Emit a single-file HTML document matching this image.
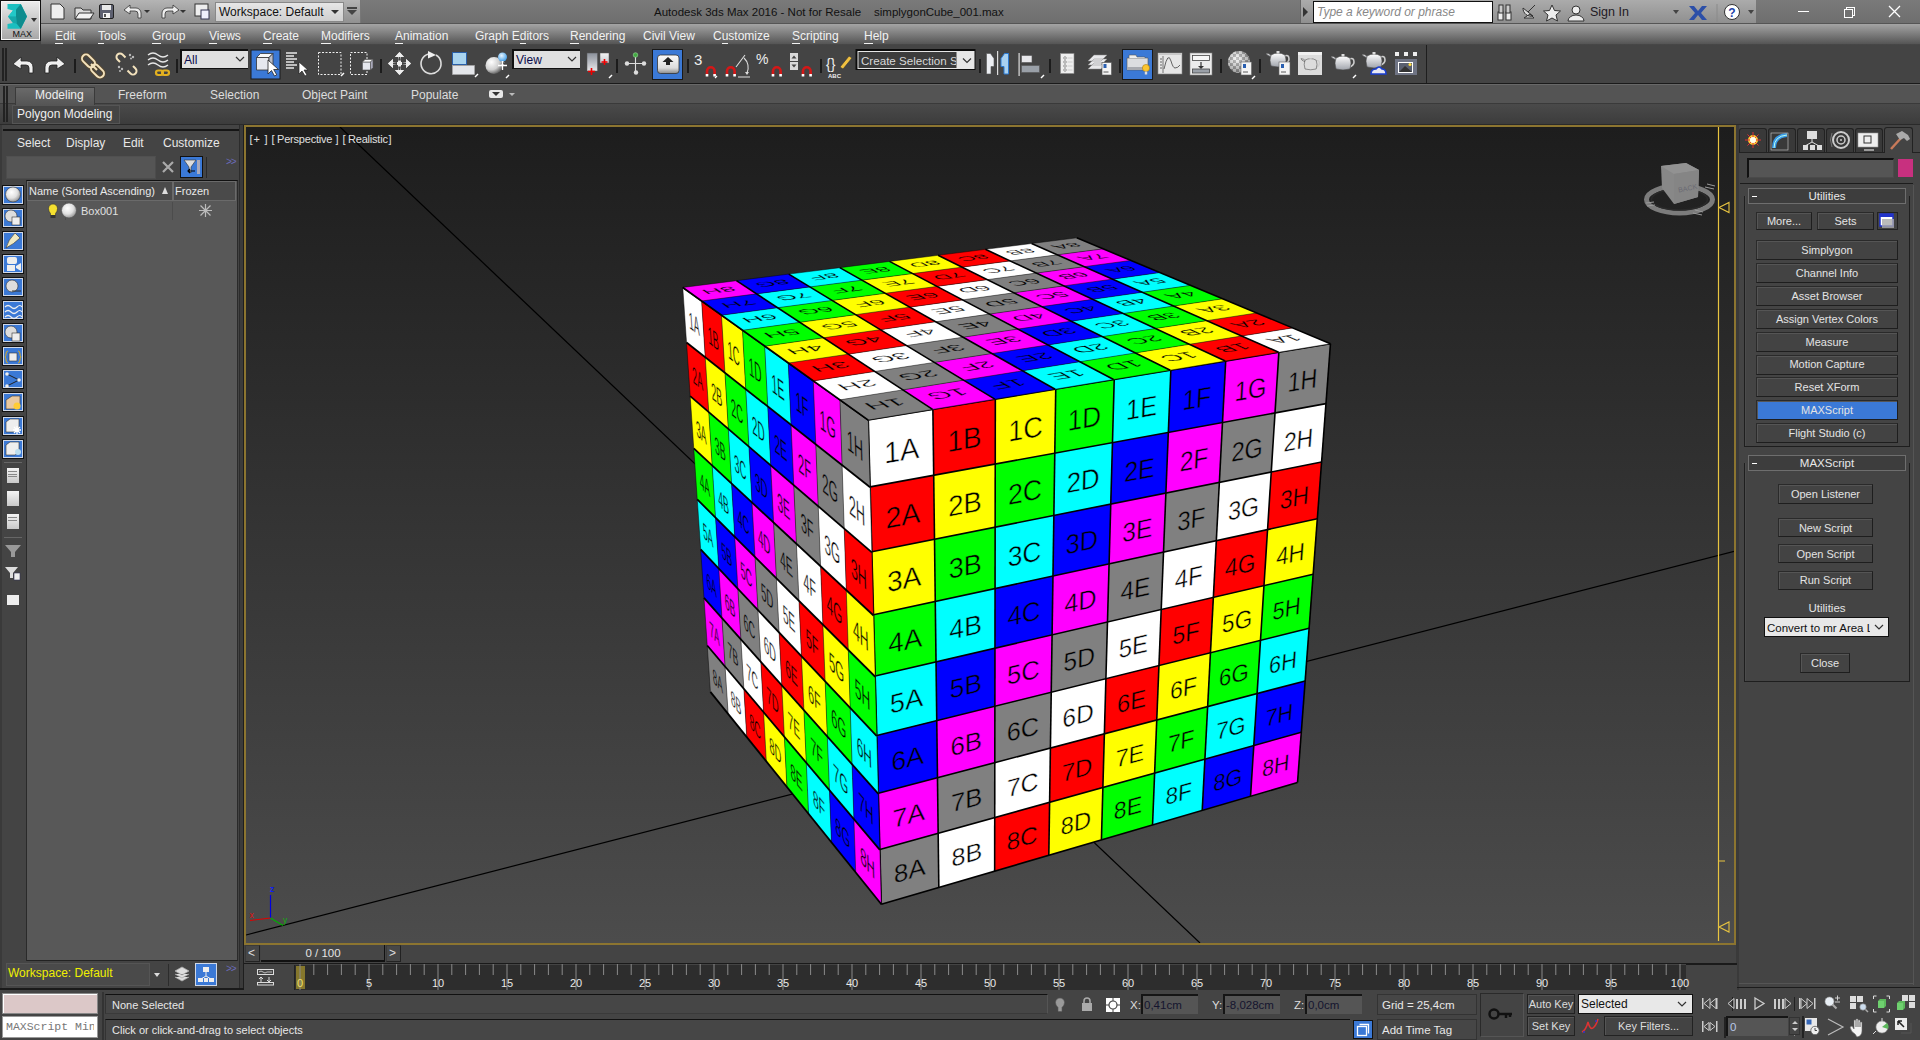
<!DOCTYPE html>
<html><head><meta charset="utf-8">
<style>
*{box-sizing:border-box;margin:0;padding:0}
html,body{width:1920px;height:1040px;overflow:hidden;background:#444;font-family:"Liberation Sans",sans-serif;font-size:12px;color:#ddd}
.a{position:absolute}
.t{position:absolute;white-space:nowrap;line-height:14px}
#vp{position:absolute;left:244px;top:125px;width:1492px;height:820px;border:2px solid #8c7530;background:linear-gradient(#1d1d1d,#4c4c4c);overflow:hidden}
#cubewrap{position:absolute;left:0;top:0;width:1920px;height:1040px;pointer-events:none}
.face{position:absolute;left:0;top:0;transform-origin:0 0}
.face>div{position:absolute;overflow:hidden}
.face span{position:absolute;left:0;top:0;width:100px;height:100px;transform-origin:0 0;font-size:45px;line-height:106px;text-align:center;color:#000}
.menu span{position:absolute;top:5px;color:#f2f2f2;white-space:nowrap}
.menu u{text-decoration:none;border-bottom:1px solid #f2f2f2}
.tb svg{position:absolute}
.sep{position:absolute;width:2px;height:20px;background:#222}
.btn{position:absolute;background:#3f3f3f;border:1px solid #222;color:#ddd;text-align:center;font-size:11.5px;line-height:19px;white-space:nowrap;overflow:hidden}
</style></head><body>
<svg width="0" height="0" style="position:absolute"><defs><radialGradient id="sph" cx="0.4" cy="0.35" r="0.65"><stop offset="0" stop-color="#ffffff"/><stop offset="0.6" stop-color="#e0e0e0"/><stop offset="1" stop-color="#9a9a9a"/></radialGradient></defs></svg>
<!-- TITLE BAR -->
<div class="a" style="left:0;top:0;width:1920px;height:24px;background:linear-gradient(#7a7a7a,#6e6e6e)"></div>
<div class="a" style="left:41px;top:0;width:320px;height:24px;background:linear-gradient(#b4b4b4,#8f8f8f);border-right:1px solid #777"></div>
<div class="a" style="left:215px;top:2px;width:129px;height:20px;background:linear-gradient(#e6e6e6,#cfcfcf);border:1px solid #888"></div>
<div class="t" style="left:219px;top:5px;color:#111;font-size:12px">Workspace: Default</div>
<div class="a" style="left:331px;top:10px;width:0;height:0;border-left:4px solid transparent;border-right:4px solid transparent;border-top:4px solid #333"></div>
<div class="a" style="left:347px;top:7px;width:10px;height:2px;background:#444"></div>
<div class="a" style="left:347px;top:10px;width:0;height:0;border-left:5px solid transparent;border-right:5px solid transparent;border-top:5px solid #444"></div>
<div class="t" style="left:654px;top:5px;color:#111;font-size:11.5px">Autodesk 3ds Max 2016 - Not for Resale</div><div class="t" style="left:874px;top:5px;color:#111;font-size:11.5px">simplygonCube_001.max</div>
<div class="a" style="left:1300px;top:0;width:456px;height:24px;background:linear-gradient(#ababab,#8e8e8e);border-left:1px solid #666"></div>
<div class="a" style="left:1303px;top:7px;width:0;height:0;border-top:5px solid transparent;border-bottom:5px solid transparent;border-left:5px solid #333"></div>
<div class="a" style="left:1313px;top:1px;width:180px;height:22px;background:#fff;border:1px solid #111"></div>
<div class="t" style="left:1317px;top:5px;color:#888;font-style:italic;font-size:12px">Type a keyword or phrase</div>
<!-- MAX logo -->
<div class="a" style="left:0;top:0;width:41px;height:41px;background:linear-gradient(#ececec,#a6a6a6);border:1px solid #111;box-shadow:inset 0 0 0 1px #f4f4f4"></div>
<svg class="a" style="left:0;top:0" width="41" height="41"><path d="M7.5 4 L20.8 4 L27 16.5 L20.8 28.8 L7.5 28.8 L7.5 24 L13 23 L8 16.5 L13 10.5 L7.5 9 Z" fill="#1bbfc0"/><path d="M16 9.5 L20.8 4 L27 16.5 L20.8 28.8 L16.5 23.5 L16 16.5 Z" fill="#0e8c8e"/><path d="M13 10.5 L16 9.5 L16 16.5 L8 16.5z" fill="#22c8c8"/><path d="M8 16.5 L16 16.5 L16.5 23.5 L13 23z" fill="#17a8aa"/></svg>
<div class="a" style="left:31px;top:18px;width:0;height:0;border-left:3.5px solid transparent;border-right:3.5px solid transparent;border-top:4px solid #333"></div>
<div class="t" style="left:12.5px;top:29px;color:#111;font-size:9px;line-height:11px">MAX</div>
<!-- quick access icons -->
<svg class="a" style="left:48px;top:1px" width="170" height="22">
 <path d="M3 3 h9 l4 4 v11 h-13z" fill="#eee" stroke="#333"/>
 <path d="M27 7 h6 l2 2 h8 v9 h-16z" fill="#ddd" stroke="#333"/><path d="M27 18 l4 -6 h15 l-4 6z" fill="#f2f2f2" stroke="#333"/>
 <rect x="51.5" y="3.5" width="14" height="14" rx="1.5" fill="#5d6070" stroke="#222"/><rect x="54" y="4" width="9" height="5" fill="#e8e8e8"/><rect x="55" y="12" width="7" height="5" fill="#f4f4f4"/><rect x="56" y="13" width="2" height="3" fill="#555"/>
 <path d="M76 9 l6 -5 v3 h6 a5 5 0 0 1 5 5 v5 h-3 v-4 a3 3 0 0 0 -3 -3 h-5 v3z" fill="#eee" stroke="#333" stroke-width="0.8"/>
 <path d="M96 9 l3 3 l3 -3z" fill="#333"/>
 <path d="M131 9 l-6 -5 v3 h-6 a5 5 0 0 0 -5 5 v5 h3 v-4 a3 3 0 0 1 3 -3 h5 v3z" fill="#eee" stroke="#333" stroke-width="0.8"/>
 <path d="M132 9 l3 3 l3 -3z" fill="#333"/>
 <rect x="147" y="3" width="13" height="12" fill="#eee" stroke="#333"/><rect x="153" y="9" width="8" height="9" fill="#eef" stroke="#335"/>
</svg>
<!-- right title icons -->
<svg class="a" style="left:1495px;top:2px" width="130" height="20">
 <rect x="3" y="10" width="5" height="8" fill="#eee" stroke="#333"/><rect x="11" y="10" width="5" height="8" fill="#eee" stroke="#333"/><rect x="4" y="3" width="4" height="8" fill="#ccc" stroke="#333"/><rect x="11" y="3" width="4" height="8" fill="#ccc" stroke="#333"/>
 <path d="M29 16 l6 -4 l4 4z M28 6 a8 8 0 0 0 10 8z" fill="#ddd" stroke="#333"/><line x1="33" y1="10" x2="40" y2="3" stroke="#333"/>
 <path d="M57 3 l2.5 5.5 l6 .5 l-4.5 4 l1.5 6 l-5.5 -3 l-5.5 3 l1.5 -6 l-4.5 -4 l6 -.5z" fill="#eee" stroke="#333"/>
 <circle cx="81" cy="8" r="4" fill="#eee" stroke="#333"/><path d="M73 19 a8 6 0 0 1 16 0z" fill="#eee" stroke="#333"/>
</svg>
<div class="t" style="left:1590px;top:5px;color:#1e1a24;font-size:12.5px">Sign In</div>
<div class="a" style="left:1673px;top:10px;width:0;height:0;border-left:3.5px solid transparent;border-right:3.5px solid transparent;border-top:4px solid #444"></div>
<svg class="a" style="left:1688px;top:4px" width="60" height="18">
 <path d="M1 2 h5 l4 5 l4 -5 h5 l-6 7 l6 7 h-5 l-4 -5 l-4 5 h-5 l6 -7z" fill="#2c4fa8"/>
 <line x1="29" y1="0" x2="29" y2="18" stroke="#8a8a8a"/>
 <circle cx="44" cy="8" r="7.5" fill="#fff" stroke="#333"/><text x="44" y="12.5" font-size="12" font-weight="bold" text-anchor="middle" fill="#1c3fa8" font-family="Liberation Sans">?</text>
</svg>
<div class="a" style="left:1748px;top:10px;width:0;height:0;border-left:3.5px solid transparent;border-right:3.5px solid transparent;border-top:4px solid #444"></div>
<div class="a" style="left:1798px;top:11px;width:11px;height:1px;background:#fff"></div>
<div class="a" style="left:1846px;top:7px;width:9px;height:9px;border:1px solid #fff"></div>
<div class="a" style="left:1844px;top:9px;width:9px;height:9px;border:1px solid #fff;background:#717171"></div>
<svg class="a" style="left:1888px;top:5px" width="13" height="13"><path d="M1 1 L12 12 M12 1 L1 12" stroke="#fff" stroke-width="1.3"/></svg>
<!-- MENU BAR -->
<div class="a" style="left:41px;top:23px;width:1879px;height:1px;background:#555"></div>
<div class="a menu" style="left:41px;top:24px;width:1879px;height:21px;background:linear-gradient(#a4a4a4,#555 95%,#3a3a3a)">
 <span style="left:14px"><u>E</u>dit</span><span style="left:57px"><u>T</u>ools</span><span style="left:111px"><u>G</u>roup</span><span style="left:168px"><u>V</u>iews</span><span style="left:222px"><u>C</u>reate</span><span style="left:280px"><u>M</u>odifiers</span><span style="left:354px"><u>A</u>nimation</span><span style="left:434px">Graph E<u>d</u>itors</span><span style="left:529px"><u>R</u>endering</span><span style="left:602px">Civil View</span><span style="left:672px">C<u>u</u>stomize</span><span style="left:751px"><u>S</u>cripting</span><span style="left:823px"><u>H</u>elp</span>
</div>
<!-- MAIN TOOLBAR -->
<div class="a" style="left:0;top:45px;width:1920px;height:39px;background:#444;border-bottom:1px solid #1a1a1a"></div>
<div class="a" style="left:0;top:45px;width:1427px;height:38px;border-right:1px solid #1e1e1e"></div>
<div class="a" style="left:2px;top:48px;width:2px;height:33px;background:#222"></div>
<div class="a" style="left:5px;top:48px;width:2px;height:33px;background:#222"></div>
<svg class="a" style="left:0;top:45px" width="1430" height="38"><defs><linearGradient id="tpg" x1="0" y1="0" x2="0" y2="1"><stop offset="0" stop-color="#ffffff"/><stop offset="1" stop-color="#a0a4ac"/></linearGradient><pattern id="chk" width="6" height="6" patternUnits="userSpaceOnUse"><rect width="6" height="6" fill="#f0f0f0"/><rect width="3" height="3" fill="#8a8a8a"/><rect x="3" y="3" width="3" height="3" fill="#8a8a8a"/></pattern><radialGradient id="sph2" cx="0.4" cy="0.35" r="0.7"><stop offset="0" stop-color="#fff" stop-opacity="0.5"/><stop offset="1" stop-color="#444" stop-opacity="0.5"/></radialGradient><radialGradient id="sph3" cx="0.35" cy="0.3" r="0.75"><stop offset="0" stop-color="#fff"/><stop offset="0.6" stop-color="#cfcfcf"/><stop offset="1" stop-color="#555"/></radialGradient><radialGradient id="sphb" cx="0.4" cy="0.35" r="0.7"><stop offset="0" stop-color="#e8f6ff"/><stop offset="1" stop-color="#3a9ae8"/></radialGradient><linearGradient id="gpv" x1="0" y1="0" x2="0" y2="1"><stop offset="0" stop-color="#8a909a"/><stop offset="1" stop-color="#e8e8ea"/></linearGradient><linearGradient id="gpw" x1="0" y1="0" x2="0" y2="1"><stop offset="0" stop-color="#f4f4f4"/><stop offset="1" stop-color="#c8cad0"/></linearGradient><linearGradient id="gkb" x1="0" y1="0" x2="0" y2="1"><stop offset="0" stop-color="#fafafa"/><stop offset="0.7" stop-color="#dcdcdc"/><stop offset="1" stop-color="#8a8a8a"/></linearGradient></defs>
 <g fill="#f0f0f0" stroke="#222" stroke-width="0.8">
  <path d="M13 19 l8 -7 v4 h6 a6 6 0 0 1 6 6 v6 h-4 v-5 a3 3 0 0 0 -3 -3 h-5 v4z"/>
  <path d="M65 19 l-8 -7 v4 h-6 a6 6 0 0 0 -6 6 v6 h4 v-5 a3 3 0 0 1 3 -3 h5 v4z"/>
 </g>
 <rect x="74" y="14" width="2" height="14" fill="#1c1c1c"/>
 <g fill="none" stroke="#5a4a30" stroke-width="3.6"><rect x="81" y="12" width="15" height="8" rx="4" transform="rotate(45 88.5 16)"/><rect x="90" y="22" width="15" height="8" rx="4" transform="rotate(45 97.5 26)"/><path d="M91 19 l6 6"/></g>
 <g fill="none" stroke="#f3e2bd" stroke-width="2"><rect x="81" y="12" width="15" height="8" rx="4" transform="rotate(45 88.5 16)"/><rect x="90" y="22" width="15" height="8" rx="4" transform="rotate(45 97.5 26)"/><path d="M91 19 l6 6"/></g>
 <g fill="none" stroke="#f3e2bd" stroke-width="2"><path d="M120 17 l-2.5 -2.5 a3.5 3.5 0 0 1 5 -5 l3 3"/><path d="M133 21 l2.5 2.5 a3.5 3.5 0 0 1 -5 5 l-3 -3"/></g>
 <g fill="#bbb"><circle cx="130" cy="10" r="1.2"/><circle cx="133" cy="12" r="1.2"/><circle cx="131" cy="13.5" r="1"/><circle cx="119" cy="22" r="1.2"/><circle cx="122" cy="24" r="1.2"/><circle cx="120" cy="26" r="1"/></g>
 <path d="M148 10 q5 -4 10 0 t10 0 M148 15 q5 -4 10 0 t10 0 M148 20 q5 -4 10 0 t10 0" fill="none" stroke="#e6e6e6" stroke-width="1.4"/>
 <g fill="none" stroke="#e2b020" stroke-width="2.2"><rect x="156" y="25.5" width="7" height="4.5" rx="2.2"/><rect x="162" y="25.5" width="7" height="4.5" rx="2.2"/></g>
 <rect x="176" y="14" width="2" height="14" fill="#1c1c1c"/>
 <rect x="180" y="4" width="68" height="20" fill="#111"/><rect x="182" y="6" width="66" height="17" fill="#e0e0e0"/>
 <text x="184" y="19" font-size="12" fill="#0a0a4a" font-family="Liberation Sans">All</text>
 <path d="M236 12 l4 4 l4 -4" stroke="#333" fill="none" stroke-width="1.2"/>
 <rect x="251" y="5" width="29" height="29" fill="#3b79d6" stroke="#1a1a1a"/>
 <path d="M256.5 12.5 h12.5 v12.5 h-12.5z" fill="#e6e8ee" stroke="#333" stroke-width="0.8"/><path d="M256.5 12.5 l4 -4 h12.5 l-4 4z" fill="#fafafa" stroke="#333" stroke-width="0.8"/><path d="M269 12.5 l4 -4 v12.5 l-4 4z" fill="#b8bcc8" stroke="#333" stroke-width="0.8"/>
 <path d="M268 15 v14 l3.5 -3.5 l3 5.5 l2.2 -1.2 l-3 -5.3 h4.8z" fill="#fff" stroke="#222" stroke-width="0.8"/>
 <g stroke="#e8e8e8" stroke-width="1.3"><path d="M286 8 h11 M286 11 h8 M286 14 h11 M286 17 h8 M286 20 h11 M286 23 h8"/></g>
 <path d="M299 17 v12 l3 -3 l3 5 l2 -1 l-3 -5 h4z" fill="#fff" stroke="#222" stroke-width="0.7"/>
 <rect x="318.5" y="7.5" width="22.5" height="22" fill="none" stroke="#eee" stroke-dasharray="2,1.5"/><path d="M341 31 l3 -3" stroke="#fff" stroke-width="1.5"/>
 <rect x="350.5" y="7.5" width="16.5" height="22" fill="none" stroke="#eee" stroke-dasharray="2,1.5"/>
 <path d="M362.5 17 h8 v8 h-8z" fill="#e6e8ee" stroke="#555" stroke-width="0.6"/><path d="M362.5 17 l2.5 -2.5 h8 l-2.5 2.5z" fill="#fafafa" stroke="#555" stroke-width="0.6"/><path d="M370.5 17 l2.5 -2.5 v8 l-2.5 2.5z" fill="#aab" stroke="#555" stroke-width="0.6"/>
 <rect x="380" y="14" width="2" height="14" fill="#1c1c1c"/>
 <path d="M399.5 7 l-4.5 5 h3 v4 M399.5 7 l4.5 5 h-3 v4 M399.5 30 l-4.5 -5 h3 v-4 M399.5 30 l4.5 -5 h-3 v-4 M388 18.5 l5 -4.5 v3 h4 M388 18.5 l5 4.5 v-3 h4 M411 18.5 l-5 -4.5 v3 h-4 M411 18.5 l-5 4.5 v-3 h-4" fill="#eee" stroke="none"/><path d="M395 12 h9 l-4.5 -5z M395 25 h9 l-4.5 5z M393 14 v9 l-5 -4.5z M406 14 v9 l5 -4.5z" fill="#eee"/><rect x="398" y="15.5" width="3" height="1.5" fill="#eee"/><rect x="398" y="20" width="3" height="1.5" fill="#eee"/><rect x="397" y="17" width="5" height="3" fill="#eee"/>
 <path d="M436 10 a10 10 0 1 1 -7.5 -1" fill="none" stroke="#ddd" stroke-width="1.6"/><path d="M428 6 l8 4 l-8 3.5z" fill="#f0f0f0"/>
 <rect x="452.5" y="7.5" width="14" height="12" fill="#a9d4ef" stroke="#2a5fa8"/><rect x="452.5" y="20.5" width="22" height="9" fill="#e4e6ea" stroke="#aaa" stroke-width="0.6"/><path d="M475 32 l3 -3" stroke="#fff" stroke-width="1.5"/>
 <circle cx="494" cy="20.5" r="8.5" fill="url(#sph3)"/><circle cx="502.5" cy="12" r="4.5" fill="url(#sphb)"/><path d="M502.5 16 v9 M498 20.5 h9" stroke="#fff" stroke-width="1.3"/><path d="M501 20.5 l1.5 -1.5 l1.5 1.5 M502.5 16 l-1.5 1.5 M502.5 16 l1.5 1.5" stroke="#fff" fill="none" stroke-width="0.8"/><path d="M506 33 l3 -3" stroke="#fff" stroke-width="1.4"/>
 <rect x="512" y="4" width="68" height="20" fill="#111"/><rect x="514" y="6" width="66" height="17" fill="#e0e0e0"/>
 <text x="516" y="19" font-size="12" fill="#0a0a4a" font-family="Liberation Sans">View</text>
 <path d="M568 12 l4 4 l4 -4" stroke="#333" fill="none" stroke-width="1.2"/>
 <rect x="587" y="8" width="10.5" height="18" fill="url(#gpv)" stroke="#555" stroke-width="0.5"/><rect x="600" y="8" width="9" height="10" fill="url(#gpw)" stroke="#555" stroke-width="0.5"/>
 <path d="M591.5 23 v7 M588 26.5 h7 M604.5 14 v6 M601.5 17 h6" stroke="#e00" stroke-width="1.6"/><path d="M609 33 l3 -3" stroke="#fff" stroke-width="1.4"/>
 <rect x="616" y="14" width="2" height="14" fill="#1c1c1c"/>
 <path d="M635.5 12 v15 M628 18.5 h15" stroke="#ddd" stroke-width="1.1"/><circle cx="635.5" cy="10" r="2.3" fill="#4a4" stroke="#9d9" stroke-width="0.6"/><circle cx="627" cy="18.5" r="2.2" fill="#ddd"/><circle cx="644" cy="18.5" r="2.2" fill="#ddd"/><circle cx="636" cy="27.5" r="2.2" fill="#ddd"/>
 <rect x="652.5" y="4.5" width="30" height="30" fill="#3b79d6" stroke="#1a1a1a"/>
 <rect x="657.5" y="10" width="21.5" height="18.5" rx="3" fill="url(#gkb)" stroke="#333" stroke-width="0.8"/><path d="M668 12 l-5.5 5 h3.5 v3 h4 v-3 h3.5z" fill="#222"/>
 <rect x="687" y="14" width="2" height="14" fill="#1c1c1c"/>
 <text x="694" y="20" font-size="15" fill="#eee" font-family="Liberation Sans">3</text>
 <g fill="none" stroke="#d41818" stroke-width="2.6"><path d="M707 30 v-4 a3.8 3.8 0 0 1 7.6 0 v4"/><path d="M727 30 v-4 a3.8 3.8 0 0 1 7.6 0 v4"/><path d="M773 30 v-4 a3.8 3.8 0 0 1 7.6 0 v4"/><path d="M803 30 v-4 a3.8 3.8 0 0 1 7.6 0 v4"/></g>
 <g fill="#fff"><rect x="705.7" y="29" width="2.6" height="2.5"/><rect x="713.3" y="29" width="2.6" height="2.5"/><rect x="725.7" y="29" width="2.6" height="2.5"/><rect x="733.3" y="29" width="2.6" height="2.5"/><rect x="771.7" y="29" width="2.6" height="2.5"/><rect x="779.3" y="29" width="2.6" height="2.5"/><rect x="801.7" y="29" width="2.6" height="2.5"/><rect x="809.3" y="29" width="2.6" height="2.5"/></g>
 <path d="M715 33 l2 -2" stroke="#fff" stroke-width="1.2"/>
 <path d="M736 22 l9 -12 M738 32 h12 M744 13 a13 13 0 0 1 3 15" fill="none" stroke="#ddd" stroke-width="1.1"/><path d="M745 27 l2 3 l2 -3z" fill="#ddd"/>
 <text x="756" y="19" font-size="14" fill="#eee" font-family="Liberation Sans">%</text>
 <rect x="790" y="8" width="8" height="8" fill="#d8d8d8"/><rect x="790" y="17" width="8" height="8" fill="#d8d8d8"/><path d="M791.5 13.5 l2.5 -3 l2.5 3z M791.5 19.5 l2.5 3 l2.5 -3z" fill="#444"/>
 <rect x="820" y="14" width="2" height="14" fill="#1c1c1c"/>
 <text x="826" y="24" font-size="14" fill="#eee" font-family="Liberation Sans">{}</text><text x="828" y="33" font-size="6" fill="#eee" font-weight="bold" font-family="Liberation Sans">ABC</text>
 <path d="M840 22 l9 -11 l3 2 l-9 11z" fill="#f0c040" stroke="#333" stroke-width="0.6"/>
 <rect x="855.5" y="4" width="120" height="21" fill="#0c0c0c"/><rect x="857.5" y="6" width="117" height="18" fill="#e6e6e6"/><rect x="858.5" y="7" width="98" height="16" fill="#3c3c3c"/><path d="M963 13.5 l4 4 l4 -4" stroke="#333" fill="none" stroke-width="1.2"/>
 <rect x="979" y="14" width="2" height="14" fill="#1c1c1c"/>
 <path d="M986.5 8.5 h4 l3.5 5 v8 h-3 v7.5 h-4.5z" fill="#eceef2" stroke="#555" stroke-width="0.6"/><path d="M1008.5 8.5 h-4 l-3.5 5 v8 h3 v7.5 h4.5z" fill="#a8d0f0" stroke="#2a78d0" stroke-width="1"/><rect x="997" y="6" width="1.2" height="24" fill="#ddd"/>
 <rect x="1018.5" y="8" width="1.2" height="23" fill="#ddd"/><rect x="1021.5" y="10.5" width="10.5" height="7" fill="#e8e8ec" stroke="#555" stroke-width="0.6"/><rect x="1021.5" y="20.5" width="18" height="7" fill="#9aa0a8" stroke="#555" stroke-width="0.6"/><path d="M1041 33 l3 -3" stroke="#fff" stroke-width="1.4"/>
 <rect x="1049" y="14" width="2" height="14" fill="#1c1c1c"/>
 <rect x="1060.5" y="8.5" width="13.5" height="20" fill="#eeeeee" stroke="#888" stroke-width="0.6"/><g fill="none" stroke="#777" stroke-width="0.7"><circle cx="1065" cy="13" r="1.3"/><circle cx="1065" cy="17" r="1.3"/><circle cx="1065" cy="21" r="1.3"/><circle cx="1065" cy="25" r="1.3"/></g><g stroke="#ccc"><path d="M1067.5 13 h5 M1067.5 17 h5 M1067.5 21 h5 M1067.5 25 h5"/></g>
 <path d="M1088 24 l6 -6 h13 l-6 6z M1088 20 l6 -6 h13 l-6 6z M1088 16 l6 -6 h13 l-6 6z" fill="#e8e8ea" stroke="#888" stroke-width="0.5"/><rect x="1102" y="17.5" width="9.5" height="12.5" fill="#f4f4f4" stroke="#555" stroke-width="0.6"/><rect x="1103.5" y="19" width="3" height="4" fill="#2a5fb0"/><path d="M1103.5 27 h5" stroke="#333" stroke-width="0.8"/>
 <rect x="1119" y="14" width="2" height="14" fill="#1c1c1c"/>
 <rect x="1122.5" y="4.5" width="30" height="30" fill="#3b79d6" stroke="#1a1a1a"/>
 <path d="M1127 13 h21 v12 h-21z" fill="#dcdde0" stroke="#555" stroke-width="0.6"/><path d="M1129 13 v-3 h7 l1 2 h8 v1" fill="#eee" stroke="#555" stroke-width="0.6"/><rect x="1127" y="22" width="21" height="3" fill="#a8aab0"/><circle cx="1146" cy="23" r="3.6" fill="#fbc530" stroke="#a07000" stroke-width="0.5"/><rect x="1144.8" y="26.5" width="2.4" height="3" fill="#ddd"/>
 <rect x="1158" y="8" width="24" height="21" fill="#e6e6e6" stroke="#888" stroke-width="0.6"/><rect x="1158" y="8" width="24" height="2" fill="#c8c8c8"/><path d="M1163 11 v17" stroke="#555" stroke-width="0.8"/><path d="M1160 14 h2 M1160 17 h2 M1160 20 h2 M1160 23 h2" stroke="#666"/><path d="M1164 24 q4 -18 7 -8 q2 7 4 7 q3 0 5 -3" fill="none" stroke="#555" stroke-width="0.9"/>
 <rect x="1190" y="8" width="22" height="22" fill="#ececec" stroke="#888" stroke-width="0.6"/><rect x="1192.5" y="10.5" width="17" height="5" fill="#f6f6f6" stroke="#444" stroke-width="0.8"/><path d="M1201 17 v5" stroke="#333" stroke-width="1.2"/><path d="M1198 21 h6 l-3 3z" fill="#333"/><rect x="1192.5" y="24" width="17" height="4" fill="#9aa0a8" stroke="#444" stroke-width="0.8"/>
 <rect x="1220" y="14" width="2" height="14" fill="#1c1c1c"/>
 <circle cx="1239" cy="17" r="11" fill="url(#chk)"/><circle cx="1239" cy="17" r="11" fill="url(#sph2)"/><rect x="1241" y="17" width="10.5" height="13" fill="#f4f4f4" stroke="#666" stroke-width="0.6"/><rect x="1243" y="19" width="3" height="4" fill="#2a5fb0"/><path d="M1243 27 h5" stroke="#333" stroke-width="0.8"/><path d="M1252 34 l3 -3" stroke="#fff" stroke-width="1.4"/>
 <rect x="1259" y="14" width="2" height="14" fill="#1c1c1c"/>
<g transform="translate(1266.0 6.0) scale(1.00)"><path d="M5 6 q-5 -2 -5 -4 q3 0 6 3z" fill="url(#tpg)" stroke="#444" stroke-width="0.6"/><path d="M18 5 q5 -2 5 3 q0 3 -4 5" fill="none" stroke="#ccc" stroke-width="1.6"/><path d="M5 4 q7 -4 14 0 q2 5 0 11 q-7 2 -14 0 q-2 -6 0 -11z" fill="url(#tpg)" stroke="#444" stroke-width="0.6"/><rect x="10.5" y="0" width="3" height="2" fill="#ddd"/></g><rect x="1279" y="17" width="11" height="13" fill="#f4f4f4" stroke="#666" stroke-width="0.6"/><rect x="1281" y="19" width="3" height="4" fill="#2a5fb0"/><path d="M1281 27 h5" stroke="#333" stroke-width="0.8"/>
 <rect x="1298" y="7" width="24" height="23" fill="#dcdcdc"/><rect x="1298" y="7" width="24" height="3" fill="#f0f0f0"/><g transform="translate(1301.0 12.0) scale(0.80)"><path d="M5 6 q-5 -2 -5 -4 q3 0 6 3z" fill="#dcdcdc" stroke="#333" stroke-width="0.6"/><path d="M18 5 q5 -2 5 3 q0 3 -4 5" fill="none" stroke="#ccc" stroke-width="1.6"/><path d="M5 4 q7 -4 14 0 q2 5 0 11 q-7 2 -14 0 q-2 -6 0 -11z" fill="#dcdcdc" stroke="#333" stroke-width="0.6"/><rect x="10.5" y="0" width="3" height="2" fill="#ddd"/></g>
<g transform="translate(1331.0 9.0) scale(1.00)"><path d="M5 6 q-5 -2 -5 -4 q3 0 6 3z" fill="url(#tpg)" stroke="#444" stroke-width="0.6"/><path d="M18 5 q5 -2 5 3 q0 3 -4 5" fill="none" stroke="#ccc" stroke-width="1.6"/><path d="M5 4 q7 -4 14 0 q2 5 0 11 q-7 2 -14 0 q-2 -6 0 -11z" fill="url(#tpg)" stroke="#444" stroke-width="0.6"/><rect x="10.5" y="0" width="3" height="2" fill="#ddd"/></g><path d="M1353 33 l3 -3" stroke="#fff" stroke-width="1.4"/>
<g transform="translate(1362.0 7.0) scale(1.00)"><path d="M5 6 q-5 -2 -5 -4 q3 0 6 3z" fill="url(#tpg)" stroke="#444" stroke-width="0.6"/><path d="M18 5 q5 -2 5 3 q0 3 -4 5" fill="none" stroke="#ccc" stroke-width="1.6"/><path d="M5 4 q7 -4 14 0 q2 5 0 11 q-7 2 -14 0 q-2 -6 0 -11z" fill="url(#tpg)" stroke="#444" stroke-width="0.6"/><rect x="10.5" y="0" width="3" height="2" fill="#ddd"/></g><path d="M1371 29 q0 -5 5 -5 q3 -4 6 0 q4 0 4 5z" fill="#e8e8f4" stroke="#1a3ed0" stroke-width="1.5"/>
 <rect x="1395" y="7" width="4" height="4" fill="#eee"/><rect x="1404" y="7" width="4" height="4" fill="#eee"/><rect x="1413" y="7" width="4" height="4" fill="#eee"/><rect x="1395" y="14" width="22" height="16" fill="#6f7484"/><rect x="1398" y="17" width="15" height="11" fill="#fff"/><rect x="1399" y="18" width="13" height="9" fill="#5a6070"/><path d="M1399 27 l6 -6 l7 6z" fill="#333"/><circle cx="1410" cy="19.5" r="1.5" fill="#fd4"/>
</svg>
<div class="t" style="left:861px;top:52.5px;width:95px;height:15px;overflow:hidden;color:#d8d8d8;font-size:11.6px;line-height:15px">Create Selection Se</div>

<!-- RIBBON -->
<div class="a" style="left:0;top:84px;width:1920px;height:20px;background:#545454;border-top:1px solid #686868;border-bottom:1px solid #3a3a3a"></div>
<div class="a" style="left:0;top:104px;width:1920px;height:21px;background:linear-gradient(#4a4a4a,#3c3c3c);border-bottom:1px solid #2a2a2a"></div>
<div class="a" style="left:3px;top:86px;width:2px;height:36px;background:#222"></div>
<div class="a" style="left:6px;top:86px;width:2px;height:36px;background:#222"></div>
<div class="a" style="left:15px;top:87px;width:80px;height:18px;background:linear-gradient(#6a6a6a,#555);border:1px solid #3a3a3a;border-bottom:none"></div>
<div class="t" style="left:35px;top:88px;color:#eee">Modeling</div>
<div class="t" style="left:118px;top:88px;color:#ddd">Freeform</div>
<div class="t" style="left:210px;top:88px;color:#ddd">Selection</div>
<div class="t" style="left:302px;top:88px;color:#ddd">Object Paint</div>
<div class="t" style="left:411px;top:88px;color:#ddd">Populate</div>
<div class="a" style="left:489px;top:90px;width:14px;height:8px;background:#e8e8e8;border-radius:2px"></div>
<div class="a" style="left:492px;top:92px;width:0;height:0;border-left:4px solid transparent;border-right:4px solid transparent;border-top:4px solid #333"></div>
<div class="a" style="left:509px;top:93px;width:0;height:0;border-left:3px solid transparent;border-right:3px solid transparent;border-top:3px solid #bbb"></div>
<div class="a" style="left:12px;top:105px;width:108px;height:19px;background:#444;border:1px solid #555"></div>
<div class="t" style="left:17px;top:107px;color:#eee">Polygon Modeling</div>
<div class="a" style="left:0;top:125px;width:244px;height:866px;background:#444"></div>
<div class="a" style="left:0;top:125px;width:2px;height:866px;background:#3a3a3a"></div>
<div class="a" style="left:3px;top:129px;width:237px;height:2px;background:#151515"></div>
<div class="a" style="left:239px;top:125px;width:5px;height:866px;background:#3b3b3b;border-left:1px solid #2c2c2c;border-right:1px solid #1e1e1e"></div>
<div class="a" style="left:0;top:988px;width:244px;height:2px;background:#1a1a1a"></div>
<div class="t" style="left:17px;top:136px;color:#e8e8e8">Select</div>
<div class="t" style="left:66px;top:136px;color:#e8e8e8">Display</div>
<div class="t" style="left:123px;top:136px;color:#e8e8e8">Edit</div>
<div class="t" style="left:163px;top:136px;color:#e8e8e8">Customize</div>
<div class="a" style="left:6px;top:156px;width:150px;height:23px;background:#555;border:1px solid #4c4c4c;border-top-color:#505050"></div>
<svg class="a" style="left:161px;top:160px" width="14" height="14"><path d="M2 2 L12 12 M12 2 L2 12" stroke="#aaa" stroke-width="2.2"/></svg>
<div class="a" style="left:180px;top:156px;width:23px;height:22px;background:#3b79d6;border:1px solid #111"></div>
<svg class="a" style="left:182px;top:158px" width="20" height="18"><path d="M2 2 h12 l-5 7 v6 l-2 -2 v-4z" fill="#ddd" stroke="#333" stroke-width="0.6"/><rect x="15" y="2" width="3" height="14" fill="#aab"/><path d="M13 13 h-7 m2 -2 l-2 2 l2 2" stroke="#000" fill="none" stroke-width="1.2"/></svg>
<div class="a" style="left:206px;top:157px;width:1px;height:21px;background:#2a2a2a"></div>
<div class="t" style="left:226px;top:155px;color:#6a6ab8;font-size:10px;letter-spacing:-1px">&gt;&gt;</div>
<div class="a" style="left:26px;top:180px;width:212px;height:781px;background:#585858;border-top:1px solid #111;border-left:1px solid #2a2a2a;border-right:1px solid #2a2a2a;border-bottom:1px solid #222"></div>
<div class="a" style="left:27px;top:181px;width:146px;height:20px;background:#4a4a4a;border:1px solid #6a6a6a"></div>
<div class="a" style="left:173px;top:181px;width:63px;height:20px;background:#4a4a4a;border:1px solid #6a6a6a"></div>
<div class="t" style="left:29px;top:184px;color:#e8e8e8;font-size:11px">Name (Sorted Ascending)</div>
<div class="a" style="left:162px;top:187px;width:0;height:0;border-left:3.5px solid transparent;border-right:3.5px solid transparent;border-bottom:7px solid #ddd"></div>
<div class="t" style="left:175px;top:184px;color:#e8e8e8;font-size:11px">Frozen</div>
<div class="a" style="left:172px;top:202px;width:1px;height:18px;background:#4c4c4c"></div>
<div class="a" style="left:65px;top:202px;width:1px;height:18px;background:#4c4c4c"></div>
<svg class="a" style="left:47px;top:201px" width="34" height="20"><path d="M6 3 a4.5 4.5 0 0 1 4.5 4.5 q0 3 -2 5 v2 h-5 v-2 q-2 -2 -2 -5 a4.5 4.5 0 0 1 4.5 -4.5z" fill="#f5e030" stroke="#333" stroke-width="0.6"/><rect x="3.5" y="14" width="5" height="3" fill="#333"/><circle cx="22" cy="9.5" r="7.5" fill="url(#sph)" stroke="#555" stroke-width="0.7"/></svg>
<div class="t" style="left:81px;top:204px;color:#e0e0e0;font-size:11px">Box001</div>
<svg class="a" style="left:198px;top:203px" width="15" height="15"><g stroke="#bbb" stroke-width="1.2"><path d="M7.5 1 v13 M1 7.5 h13 M2.5 2.5 l10 10 M12.5 2.5 l-10 10"/></g></svg>
<div class="a" style="left:2px;top:184.5px;width:22px;height:20px;background:#3b79d6;border:1px solid #111;box-shadow:inset 0 0 0 1px #cfd8e8"></div>
<div class="a" style="left:2px;top:207.6px;width:22px;height:20px;background:#3b79d6;border:1px solid #111;box-shadow:inset 0 0 0 1px #cfd8e8"></div>
<div class="a" style="left:2px;top:230.7px;width:22px;height:20px;background:#3b79d6;border:1px solid #111;box-shadow:inset 0 0 0 1px #cfd8e8"></div>
<div class="a" style="left:2px;top:253.8px;width:22px;height:20px;background:#3b79d6;border:1px solid #111;box-shadow:inset 0 0 0 1px #cfd8e8"></div>
<div class="a" style="left:2px;top:276.9px;width:22px;height:20px;background:#3b79d6;border:1px solid #111;box-shadow:inset 0 0 0 1px #cfd8e8"></div>
<div class="a" style="left:2px;top:300.0px;width:22px;height:20px;background:#3b79d6;border:1px solid #111;box-shadow:inset 0 0 0 1px #cfd8e8"></div>
<div class="a" style="left:2px;top:323.1px;width:22px;height:20px;background:#3b79d6;border:1px solid #111;box-shadow:inset 0 0 0 1px #cfd8e8"></div>
<div class="a" style="left:2px;top:346.2px;width:22px;height:20px;background:#3b79d6;border:1px solid #111;box-shadow:inset 0 0 0 1px #cfd8e8"></div>
<div class="a" style="left:2px;top:369.3px;width:22px;height:20px;background:#3b79d6;border:1px solid #111;box-shadow:inset 0 0 0 1px #cfd8e8"></div>
<div class="a" style="left:2px;top:392.4px;width:22px;height:20px;background:#3b79d6;border:1px solid #111;box-shadow:inset 0 0 0 1px #cfd8e8"></div>
<div class="a" style="left:2px;top:415.5px;width:22px;height:20px;background:#3b79d6;border:1px solid #111;box-shadow:inset 0 0 0 1px #cfd8e8"></div>
<div class="a" style="left:2px;top:438.6px;width:22px;height:20px;background:#3b79d6;border:1px solid #111;box-shadow:inset 0 0 0 1px #cfd8e8"></div>
<svg class="a" style="left:3px;top:185.0px" width="20" height="19"><circle cx="10" cy="9.5" r="7.5" fill="url(#sph)" stroke="#333" stroke-width="0.6"/></svg>
<svg class="a" style="left:3px;top:208.1px" width="20" height="19"><circle cx="8" cy="8" r="6" fill="#ddd" stroke="#333" stroke-width="0.6"/><rect x="9" y="9" width="8" height="8" fill="#eee" stroke="#333" stroke-width="0.6"/></svg>
<svg class="a" style="left:3px;top:231.2px" width="20" height="19"><path d="M12 2 l5 5 q-6 6 -14 10 q2 -8 9 -15z" fill="#f0e8c0" stroke="#333" stroke-width="0.6"/></svg>
<svg class="a" style="left:3px;top:254.3px" width="20" height="19"><rect x="4" y="3" width="10" height="7" rx="2" fill="#eee"/><rect x="4" y="11" width="8" height="6" fill="#eee"/><path d="M13 12 l5 -3 v8 l-5 -3z" fill="#eee"/></svg>
<svg class="a" style="left:3px;top:277.4px" width="20" height="19"><circle cx="9" cy="9" r="6" fill="#ddd" stroke="#333" stroke-width="0.6"/><path d="M9 14 h9" stroke="#333"/></svg>
<svg class="a" style="left:3px;top:300.5px" width="20" height="19"><path d="M2 6 q3 -3 6 0 t6 0 t5 0 M2 11 q3 -3 6 0 t6 0 t5 0 M2 16 q3 -3 6 0 t6 0 t5 0" fill="none" stroke="#eee" stroke-width="1.2"/></svg>
<svg class="a" style="left:3px;top:323.6px" width="20" height="19"><circle cx="8" cy="8" r="6" fill="#ddd" stroke="#333" stroke-width="0.6"/><rect x="9" y="9" width="8" height="8" fill="#eee" stroke="#333" stroke-width="0.6"/></svg>
<svg class="a" style="left:3px;top:346.7px" width="20" height="19"><path d="M5 4 q-2 0 -2 3 q0 2 -1 3 q1 1 1 3 q0 3 2 3 M15 4 q2 0 2 3 q0 2 1 3 q-1 1 -1 3 q0 3 -2 3" fill="none" stroke="#d8a820"/><rect x="6" y="6" width="8" height="8" fill="#eee" stroke="#333" stroke-width="0.6"/></svg>
<svg class="a" style="left:3px;top:369.8px" width="20" height="19"><path d="M4 4 L16 10 L4 16" fill="none" stroke="#222" stroke-width="1"/><circle cx="4" cy="4" r="1.8" fill="#eee"/><circle cx="16" cy="10" r="1.8" fill="#eee"/><circle cx="4" cy="16" r="1.8" fill="#eee"/></svg>
<svg class="a" style="left:3px;top:392.9px" width="20" height="19"><path d="M3 7 l6 -4 h8 v9 l-6 4 h-8z" fill="#e8c8a0" stroke="#333" stroke-width="0.6"/><circle cx="14" cy="13" r="3.5" fill="#fc3"/></svg>
<svg class="a" style="left:3px;top:416.0px" width="20" height="19"><path d="M3 6 l4 -3 h9 v10 l-4 3 h-9z" fill="#eee" stroke="#333" stroke-width="0.6"/><path d="M14 10 v8 M10 14 h8 M11 11 l6 6 M17 11 l-6 6" stroke="#fff" stroke-width="1.3"/></svg>
<svg class="a" style="left:3px;top:439.1px" width="20" height="19"><path d="M3 6 l4 -3 h9 v10 l-4 3 h-9z" fill="#eee" stroke="#333" stroke-width="0.6"/><circle cx="15" cy="13" r="3" fill="#bde"/></svg>
<div class="a" style="left:4px;top:462px;width:18px;height:1px;background:#666"></div>
<div class="a" style="left:4px;top:537px;width:18px;height:1px;background:#666"></div>
<div class="a" style="left:7px;top:468px;width:12px;height:15px;background:linear-gradient(#f4f4f4,#c8c8c8)"></div>
<div class="a" style="left:7px;top:491px;width:12px;height:15px;background:linear-gradient(#f4f4f4,#c8c8c8)"></div>
<div class="a" style="left:7px;top:514px;width:12px;height:15px;background:linear-gradient(#f4f4f4,#c8c8c8)"></div>
<div class="a" style="left:8px;top:471px;width:9px;height:8px;background:repeating-linear-gradient(#888 0 1px,transparent 1px 2.5px)"></div>
<div class="a" style="left:8px;top:517px;width:9px;height:5px;background:repeating-linear-gradient(#888 0 1px,transparent 1px 2.5px)"></div>
<svg class="a" style="left:4px;top:543px" width="18" height="64"><path d="M1 2 h16 l-6 7 v5 h-4 v-5z" fill="#999"/><path d="M1 24 h13 l-5 6 v5 h-3 v-5z" fill="#ddd"/><rect x="10" y="30" width="6" height="7" fill="#eee" stroke="#335" stroke-width="0.6"/><rect x="3" y="47" width="12" height="15" fill="#eee"/><rect x="3" y="47" width="12" height="5" fill="#444"/></svg>
<div class="a" style="left:6px;top:963px;width:144px;height:23px;background:#4a4a4a;border:1px solid #555"></div>
<div class="t" style="left:8px;top:966px;color:#f0f000;font-size:12px">Workspace: Default</div>
<div class="a" style="left:154px;top:973px;width:0;height:0;border-left:3.5px solid transparent;border-right:3.5px solid transparent;border-top:4px solid #ddd"></div>
<div class="a" style="left:168px;top:964px;width:1px;height:22px;background:#2c2c2c"></div>
<svg class="a" style="left:174px;top:966px" width="16" height="16"><path d="M1 5 l7 -4 l7 4 l-7 4z M1 8 l7 4 l7 -4 M1 11 l7 4 l7 -4" fill="#ddd" stroke="#aaa" stroke-width="0.8"/></svg>
<div class="a" style="left:195px;top:963px;width:22px;height:23px;background:#3b79d6;border:1px solid #cfd8e8"></div>
<svg class="a" style="left:197px;top:965px" width="18" height="19"><rect x="6" y="2" width="6" height="5" fill="#eee"/><path d="M9 7 v4 M4 14 l5 -3 l5 3" stroke="#eee" fill="none"/><rect x="1" y="13" width="5" height="4" fill="#eee"/><rect x="7" y="13" width="4" height="4" fill="#eee"/><rect x="12" y="13" width="5" height="4" fill="#eee"/></svg>
<div class="t" style="left:226px;top:962px;color:#6a6ab8;font-size:10px;letter-spacing:-1px">&gt;&gt;</div>
<div id="vp">
 <svg class="a" style="left:-246px;top:-127px" width="1920" height="1040">
  <line x1="246" y1="935" x2="1735" y2="551" stroke="#000" stroke-width="1.2"/>
  <line x1="340" y1="127" x2="1200" y2="943" stroke="#000" stroke-width="1.2"/>
  <line x1="1718.5" y1="127" x2="1718.5" y2="941" stroke="#e8c440" stroke-width="1.2"/>
  <path d="M1719 207.5 l10 -5 v10z M1719 927 l10 -5 v10z" fill="none" stroke="#e8c440" stroke-width="1.1"/>
  <line x1="1719" y1="861" x2="1725" y2="861" stroke="#e8c440" stroke-width="1"/>
  <g>
   <ellipse cx="1679.5" cy="199.5" rx="33" ry="13.5" fill="none" stroke="#7c7c7c" stroke-width="5"/>
   <ellipse cx="1679.5" cy="199.5" rx="28" ry="10.5" fill="none" stroke="#2a2a2a" stroke-width="1.5"/>
   <path d="M1646 203 l8 -1 M1647 206 l8 -1 M1705 187 l9 2 M1707 184 l8 2 M1693 213 l9 2 M1695 210 l8 2" stroke="#9a9a9a" stroke-width="1"/>
   <path d="M1661 166 L1686 163 L1699 170 L1698 197 L1674 204 L1662 188 Z" fill="#888"/>
   <path d="M1661 166 L1686 163 L1699 170 L1674 174 Z" fill="#929292"/>
   <path d="M1674 174 L1699 170 L1698 197 L1674 204 Z" fill="#858585"/>
   <text x="1678" y="191" font-size="7" fill="#6a6a72" font-family="Liberation Sans" transform="rotate(-12 1686 188)">BACK</text>
  </g>
  <g>
   <path d="M270.5 918 V895" stroke="#0000e0" stroke-width="1.2"/><path d="M270.5 918 L250 920.5" stroke="#e00000" stroke-width="1.2"/><path d="M270.5 918 L283 925.5" stroke="#00b000" stroke-width="1.2"/>
   <text x="270" y="892" font-size="8.5" fill="#1020f0" font-family="Liberation Sans" font-weight="bold">z</text>
   <text x="249.5" y="918" font-size="8.5" fill="#e01010" font-family="Liberation Sans">x</text>
   <text x="283" y="923" font-size="8.5" fill="#10b010" font-family="Liberation Sans">y</text>
  </g>
 </svg>
 <div class="a" style="left:-246px;top:-127px;color:#e0e0e0;font-size:11px;line-height:12px">
  <span class="t" style="left:249.5px;top:132px">[</span><span class="t" style="left:253.5px;top:132px">+</span><span class="t" style="left:264.5px;top:132px">]</span>
  <span class="t" style="left:271.5px;top:132px">[</span><span class="t" style="left:277px;top:132px;letter-spacing:-0.2px">Perspective</span><span class="t" style="left:335.5px;top:132px">]</span>
  <span class="t" style="left:342.5px;top:132px">[</span><span class="t" style="left:348px;top:132px;letter-spacing:-0.2px">Realistic</span><span class="t" style="left:388.5px;top:132px">]</span>
 </div>
</div>
<div id="cubewrap"><svg class="a" style="left:0;top:0" width="1920" height="1040"><g font-family="Liberation Sans" font-size="45" text-anchor="middle" fill="#000" stroke-width="0.7" dominant-baseline="central"><path d="M868.29 420.05 L932.88 409.38 L933.70 475.29 L870.09 486.91 Z" fill="#ffffff"/><path d="M932.88 409.38 L995.33 399.07 L995.24 464.05 L933.70 475.29 Z" fill="#ff0000"/><path d="M995.33 399.07 L1055.74 389.09 L1054.79 453.17 L995.24 464.05 Z" fill="#ffff00"/><path d="M1055.74 389.09 L1114.22 379.44 L1112.46 442.63 L1054.79 453.17 Z" fill="#00ff00"/><path d="M1114.22 379.44 L1170.84 370.09 L1168.33 432.42 L1112.46 442.63 Z" fill="#00ffff"/><path d="M1170.84 370.09 L1225.70 361.03 L1222.49 422.53 L1168.33 432.42 Z" fill="#0000ff"/><path d="M1225.70 361.03 L1278.88 352.25 L1275.01 412.94 L1222.49 422.53 Z" fill="#ff00ff"/><path d="M1278.88 352.25 L1330.46 343.73 L1325.96 403.63 L1275.01 412.94 Z" fill="#808080"/><path d="M870.09 486.91 L933.70 475.29 L934.50 539.28 L871.84 551.80 Z" fill="#ff0000"/><path d="M933.70 475.29 L995.24 464.05 L995.15 527.17 L934.50 539.28 Z" fill="#ffff00"/><path d="M995.24 464.05 L1054.79 453.17 L1053.87 515.44 L995.15 527.17 Z" fill="#00ff00"/><path d="M1054.79 453.17 L1112.46 442.63 L1110.75 504.08 L1053.87 515.44 Z" fill="#00ffff"/><path d="M1112.46 442.63 L1168.33 432.42 L1165.89 493.07 L1110.75 504.08 Z" fill="#0000ff"/><path d="M1168.33 432.42 L1222.49 422.53 L1219.36 482.39 L1165.89 493.07 Z" fill="#ff00ff"/><path d="M1222.49 422.53 L1275.01 412.94 L1271.24 472.03 L1219.36 482.39 Z" fill="#808080"/><path d="M1275.01 412.94 L1325.96 403.63 L1321.59 461.97 L1271.24 472.03 Z" fill="#ffffff"/><path d="M871.84 551.80 L934.50 539.28 L935.27 601.45 L873.53 614.81 Z" fill="#ffff00"/><path d="M934.50 539.28 L995.15 527.17 L995.06 588.52 L935.27 601.45 Z" fill="#00ff00"/><path d="M995.15 527.17 L1053.87 515.44 L1052.97 576.00 L995.06 588.52 Z" fill="#00ffff"/><path d="M1053.87 515.44 L1110.75 504.08 L1109.09 563.86 L1052.97 576.00 Z" fill="#0000ff"/><path d="M1110.75 504.08 L1165.89 493.07 L1163.52 552.08 L1109.09 563.86 Z" fill="#ff00ff"/><path d="M1165.89 493.07 L1219.36 482.39 L1216.32 540.66 L1163.52 552.08 Z" fill="#808080"/><path d="M1219.36 482.39 L1271.24 472.03 L1267.56 529.58 L1216.32 540.66 Z" fill="#ffffff"/><path d="M1271.24 472.03 L1321.59 461.97 L1317.32 518.82 L1267.56 529.58 Z" fill="#ff0000"/><path d="M873.53 614.81 L935.27 601.45 L936.03 661.87 L875.18 676.01 Z" fill="#00ff00"/><path d="M935.27 601.45 L995.06 588.52 L994.97 648.17 L936.03 661.87 Z" fill="#00ffff"/><path d="M995.06 588.52 L1052.97 576.00 L1052.09 634.90 L994.97 648.17 Z" fill="#0000ff"/><path d="M1052.97 576.00 L1109.09 563.86 L1107.48 622.03 L1052.09 634.90 Z" fill="#ff00ff"/><path d="M1109.09 563.86 L1163.52 552.08 L1161.21 609.54 L1107.48 622.03 Z" fill="#808080"/><path d="M1163.52 552.08 L1216.32 540.66 L1213.35 597.42 L1161.21 609.54 Z" fill="#ffffff"/><path d="M1216.32 540.66 L1267.56 529.58 L1263.98 585.66 L1213.35 597.42 Z" fill="#ff0000"/><path d="M1267.56 529.58 L1317.32 518.82 L1313.16 574.23 L1263.98 585.66 Z" fill="#ffff00"/><path d="M875.18 676.01 L936.03 661.87 L936.76 720.62 L876.78 735.50 Z" fill="#00ffff"/><path d="M936.03 661.87 L994.97 648.17 L994.88 706.20 L936.76 720.62 Z" fill="#0000ff"/><path d="M994.97 648.17 L1052.09 634.90 L1051.24 692.22 L994.88 706.20 Z" fill="#ff00ff"/><path d="M1052.09 634.90 L1107.48 622.03 L1105.91 678.66 L1051.24 692.22 Z" fill="#808080"/><path d="M1107.48 622.03 L1161.21 609.54 L1158.96 665.50 L1105.91 678.66 Z" fill="#ffffff"/><path d="M1161.21 609.54 L1213.35 597.42 L1210.46 652.72 L1158.96 665.50 Z" fill="#ff0000"/><path d="M1213.35 597.42 L1263.98 585.66 L1260.49 640.31 L1210.46 652.72 Z" fill="#ffff00"/><path d="M1263.98 585.66 L1313.16 574.23 L1309.11 628.25 L1260.49 640.31 Z" fill="#00ff00"/><path d="M876.78 735.50 L936.76 720.62 L937.47 777.75 L878.33 793.32 Z" fill="#0000ff"/><path d="M936.76 720.62 L994.88 706.20 L994.80 762.66 L937.47 777.75 Z" fill="#ff00ff"/><path d="M994.88 706.20 L1051.24 692.22 L1050.41 748.01 L994.80 762.66 Z" fill="#808080"/><path d="M1051.24 692.22 L1105.91 678.66 L1104.37 733.81 L1050.41 748.01 Z" fill="#ffffff"/><path d="M1105.91 678.66 L1158.96 665.50 L1156.76 720.01 L1104.37 733.81 Z" fill="#ff0000"/><path d="M1158.96 665.50 L1210.46 652.72 L1207.65 706.61 L1156.76 720.01 Z" fill="#ffff00"/><path d="M1210.46 652.72 L1260.49 640.31 L1257.09 693.59 L1207.65 706.61 Z" fill="#00ff00"/><path d="M1260.49 640.31 L1309.11 628.25 L1305.15 680.94 L1257.09 693.59 Z" fill="#00ffff"/><path d="M878.33 793.32 L937.47 777.75 L938.16 833.35 L879.85 849.57 Z" fill="#ff00ff"/><path d="M937.47 777.75 L994.80 762.66 L994.72 817.62 L938.16 833.35 Z" fill="#808080"/><path d="M994.80 762.66 L1050.41 748.01 L1049.60 802.35 L994.72 817.62 Z" fill="#ffffff"/><path d="M1050.41 748.01 L1104.37 733.81 L1102.88 787.53 L1049.60 802.35 Z" fill="#ff0000"/><path d="M1104.37 733.81 L1156.76 720.01 L1154.63 773.14 L1102.88 787.53 Z" fill="#ffff00"/><path d="M1156.76 720.01 L1207.65 706.61 L1204.90 759.15 L1154.63 773.14 Z" fill="#00ff00"/><path d="M1207.65 706.61 L1257.09 693.59 L1253.77 745.56 L1204.90 759.15 Z" fill="#00ffff"/><path d="M1257.09 693.59 L1305.15 680.94 L1301.29 732.34 L1253.77 745.56 Z" fill="#0000ff"/><path d="M879.85 849.57 L938.16 833.35 L938.84 887.46 L881.32 904.29 Z" fill="#808080"/><path d="M938.16 833.35 L994.72 817.62 L994.64 871.13 L938.84 887.46 Z" fill="#ffffff"/><path d="M994.72 817.62 L1049.60 802.35 L1048.82 855.28 L994.64 871.13 Z" fill="#ff0000"/><path d="M1049.60 802.35 L1102.88 787.53 L1101.43 839.89 L1048.82 855.28 Z" fill="#ffff00"/><path d="M1102.88 787.53 L1154.63 773.14 L1152.54 824.93 L1101.43 839.89 Z" fill="#00ff00"/><path d="M1154.63 773.14 L1204.90 759.15 L1202.23 810.39 L1152.54 824.93 Z" fill="#00ffff"/><path d="M1204.90 759.15 L1253.77 745.56 L1250.54 796.26 L1202.23 810.39 Z" fill="#0000ff"/><path d="M1253.77 745.56 L1301.29 732.34 L1297.53 782.51 L1250.54 796.26 Z" fill="#ff00ff"/><line x1="868.29" y1="420.05" x2="881.32" y2="904.29" stroke="rgba(0,0,0,1.00)" stroke-width="1.60"/><line x1="868.29" y1="420.05" x2="1330.46" y2="343.73" stroke="rgba(0,0,0,1.00)" stroke-width="1.60"/><line x1="932.88" y1="409.38" x2="938.84" y2="887.46" stroke="rgba(0,0,0,1.00)" stroke-width="1.60"/><line x1="870.09" y1="486.91" x2="1325.96" y2="403.63" stroke="rgba(0,0,0,1.00)" stroke-width="1.60"/><line x1="995.33" y1="399.07" x2="994.64" y2="871.13" stroke="rgba(0,0,0,1.00)" stroke-width="1.60"/><line x1="871.84" y1="551.80" x2="1321.59" y2="461.97" stroke="rgba(0,0,0,1.00)" stroke-width="1.60"/><line x1="1055.74" y1="389.09" x2="1048.82" y2="855.28" stroke="rgba(0,0,0,1.00)" stroke-width="1.60"/><line x1="873.53" y1="614.81" x2="1317.32" y2="518.82" stroke="rgba(0,0,0,1.00)" stroke-width="1.60"/><line x1="1114.22" y1="379.44" x2="1101.43" y2="839.89" stroke="rgba(0,0,0,1.00)" stroke-width="1.60"/><line x1="875.18" y1="676.01" x2="1313.16" y2="574.23" stroke="rgba(0,0,0,1.00)" stroke-width="1.60"/><line x1="1170.84" y1="370.09" x2="1152.54" y2="824.93" stroke="rgba(0,0,0,1.00)" stroke-width="1.60"/><line x1="876.78" y1="735.50" x2="1309.11" y2="628.25" stroke="rgba(0,0,0,1.00)" stroke-width="1.60"/><line x1="1225.70" y1="361.03" x2="1202.23" y2="810.39" stroke="rgba(0,0,0,1.00)" stroke-width="1.60"/><line x1="878.33" y1="793.32" x2="1305.15" y2="680.94" stroke="rgba(0,0,0,1.00)" stroke-width="1.60"/><line x1="1278.88" y1="352.25" x2="1250.54" y2="796.26" stroke="rgba(0,0,0,1.00)" stroke-width="1.60"/><line x1="879.85" y1="849.57" x2="1301.29" y2="732.34" stroke="rgba(0,0,0,1.00)" stroke-width="1.60"/><line x1="1330.46" y1="343.73" x2="1297.53" y2="782.51" stroke="rgba(0,0,0,1.00)" stroke-width="1.60"/><line x1="881.32" y1="904.29" x2="1297.53" y2="782.51" stroke="rgba(0,0,0,1.00)" stroke-width="1.60"/><text transform="matrix(0.64066 -0.11179 0.01300 0.66314 901.56 450.10)" stroke="#ffffff">1A</text><text transform="matrix(0.61957 -0.10811 0.00355 0.65375 964.56 439.10)" stroke="#ff0000">1B</text><text transform="matrix(0.59950 -0.10461 -0.00530 0.64461 1025.50 428.47)" stroke="#ffff00">1C</text><text transform="matrix(0.58040 -0.10128 -0.01359 0.63571 1084.49 418.18)" stroke="#00ff00">1D</text><text transform="matrix(0.56219 -0.09810 -0.02135 0.62705 1141.61 408.21)" stroke="#00ffff">1E</text><text transform="matrix(0.54482 -0.09507 -0.02863 0.61862 1196.96 398.55)" stroke="#0000ff">1F</text><text transform="matrix(0.52825 -0.09218 -0.03546 0.61041 1250.61 389.19)" stroke="#ff00ff">1G</text><text transform="matrix(0.51243 -0.08942 -0.04186 0.60241 1302.63 380.11)" stroke="#808080">1H</text><text transform="matrix(0.63103 -0.12102 0.01262 0.64380 902.84 515.44)" stroke="#ff0000">2A</text><text transform="matrix(0.61056 -0.11709 0.00345 0.63498 964.91 503.53)" stroke="#ffff00">2B</text><text transform="matrix(0.59106 -0.11335 -0.00515 0.62640 1024.98 492.01)" stroke="#00ff00">2C</text><text transform="matrix(0.57249 -0.10979 -0.01321 0.61804 1083.15 480.86)" stroke="#00ffff">2D</text><text transform="matrix(0.55477 -0.10639 -0.02077 0.60989 1139.51 470.05)" stroke="#0000ff">2E</text><text transform="matrix(0.53787 -0.10315 -0.02786 0.60195 1194.13 459.57)" stroke="#ff00ff">2F</text><text transform="matrix(0.52172 -0.10005 -0.03452 0.59421 1247.11 449.42)" stroke="#808080">2G</text><text transform="matrix(0.50630 -0.09710 -0.04077 0.58665 1298.50 439.56)" stroke="#ffffff">2H</text><text transform="matrix(0.62169 -0.12966 0.01226 0.62528 904.08 578.88)" stroke="#ffff00">3A</text><text transform="matrix(0.60180 -0.12551 0.00335 0.61702 965.25 566.13)" stroke="#00ff00">3B</text><text transform="matrix(0.58286 -0.12156 -0.00501 0.60896 1024.47 553.78)" stroke="#00ffff">3C</text><text transform="matrix(0.56479 -0.11779 -0.01285 0.60110 1081.85 541.81)" stroke="#0000ff">3D</text><text transform="matrix(0.54755 -0.11420 -0.02021 0.59343 1137.46 530.21)" stroke="#ff00ff">3E</text><text transform="matrix(0.53109 -0.11077 -0.02712 0.58595 1191.38 518.96)" stroke="#808080">3F</text><text transform="matrix(0.51535 -0.10748 -0.03361 0.57864 1243.70 508.05)" stroke="#ffffff">3G</text><text transform="matrix(0.50031 -0.10435 -0.03972 0.57151 1294.48 497.46)" stroke="#ff0000">3H</text><text transform="matrix(0.61262 -0.13777 0.01191 0.60756 905.29 640.52)" stroke="#00ff00">4A</text><text transform="matrix(0.59330 -0.13342 0.00326 0.59981 965.58 626.96)" stroke="#00ffff">4B</text><text transform="matrix(0.57487 -0.12928 -0.00487 0.59224 1023.98 613.83)" stroke="#0000ff">4C</text><text transform="matrix(0.55729 -0.12533 -0.01250 0.58484 1080.58 601.10)" stroke="#ff00ff">4D</text><text transform="matrix(0.54051 -0.12155 -0.01967 0.57762 1135.47 588.76)" stroke="#808080">4E</text><text transform="matrix(0.52447 -0.11795 -0.02641 0.57057 1188.71 576.78)" stroke="#ffffff">4F</text><text transform="matrix(0.50914 -0.11450 -0.03274 0.56368 1240.38 565.16)" stroke="#ff0000">4G</text><text transform="matrix(0.49446 -0.11120 -0.03870 0.55695 1290.56 553.88)" stroke="#ffff00">4H</text><text transform="matrix(0.60381 -0.14537 0.01158 0.59058 906.46 700.42)" stroke="#00ffff">5A</text><text transform="matrix(0.58503 -0.14085 0.00317 0.58330 965.90 686.11)" stroke="#0000ff">5B</text><text transform="matrix(0.56711 -0.13653 -0.00474 0.57619 1023.50 672.25)" stroke="#ff00ff">5C</text><text transform="matrix(0.55000 -0.13241 -0.01217 0.56924 1079.35 658.80)" stroke="#808080">5D</text><text transform="matrix(0.53365 -0.12848 -0.01915 0.56244 1133.52 645.76)" stroke="#ffffff">5E</text><text transform="matrix(0.51802 -0.12472 -0.02572 0.55579 1186.10 633.10)" stroke="#ff0000">5F</text><text transform="matrix(0.50307 -0.12112 -0.03191 0.54929 1237.15 620.81)" stroke="#ffff00">5G</text><text transform="matrix(0.48875 -0.11767 -0.03773 0.54293 1286.74 608.87)" stroke="#00ff00">5H</text><text transform="matrix(0.59525 -0.15250 0.01126 0.57430 907.61 758.66)" stroke="#0000ff">6A</text><text transform="matrix(0.57699 -0.14782 0.00308 0.56747 966.21 743.65)" stroke="#ff00ff">6B</text><text transform="matrix(0.55955 -0.14335 -0.00461 0.56079 1023.03 729.09)" stroke="#808080">6C</text><text transform="matrix(0.54289 -0.13909 -0.01185 0.55425 1078.15 714.97)" stroke="#ffffff">6D</text><text transform="matrix(0.52696 -0.13500 -0.01866 0.54785 1131.63 701.27)" stroke="#ff0000">6E</text><text transform="matrix(0.51172 -0.13110 -0.02507 0.54158 1183.56 687.96)" stroke="#ffff00">6F</text><text transform="matrix(0.49714 -0.12736 -0.03110 0.53545 1234.00 675.04)" stroke="#00ff00">6G</text><text transform="matrix(0.48317 -0.12379 -0.03679 0.52944 1283.01 662.48)" stroke="#00ffff">6H</text><text transform="matrix(0.58693 -0.15919 0.01096 0.55869 908.72 815.30)" stroke="#ff00ff">7A</text><text transform="matrix(0.56916 -0.15437 0.00300 0.55228 966.52 799.63)" stroke="#808080">7B</text><text transform="matrix(0.55219 -0.14976 -0.00449 0.54600 1022.58 784.42)" stroke="#ffffff">7C</text><text transform="matrix(0.53596 -0.14536 -0.01154 0.53984 1076.98 769.67)" stroke="#ff0000">7D</text><text transform="matrix(0.52044 -0.14115 -0.01818 0.53382 1129.79 755.34)" stroke="#ffff00">7E</text><text transform="matrix(0.50558 -0.13712 -0.02443 0.52791 1181.09 741.43)" stroke="#00ff00">7F</text><text transform="matrix(0.49135 -0.13326 -0.03033 0.52212 1230.93 727.91)" stroke="#00ffff">7G</text><text transform="matrix(0.47771 -0.12956 -0.03589 0.51644 1279.38 714.77)" stroke="#0000ff">7H</text><text transform="matrix(0.57884 -0.16546 0.01066 0.54370 909.80 870.42)" stroke="#808080">8A</text><text transform="matrix(0.56155 -0.16052 0.00292 0.53768 966.81 854.12)" stroke="#ffffff">8B</text><text transform="matrix(0.54502 -0.15579 -0.00437 0.53178 1022.13 838.31)" stroke="#ff0000">8C</text><text transform="matrix(0.52921 -0.15127 -0.01124 0.52599 1075.84 822.96)" stroke="#ffff00">8D</text><text transform="matrix(0.51407 -0.14695 -0.01772 0.52032 1128.00 808.05)" stroke="#00ff00">8E</text><text transform="matrix(0.49958 -0.14280 -0.02383 0.51475 1178.67 793.56)" stroke="#00ffff">8F</text><text transform="matrix(0.48569 -0.13883 -0.02958 0.50928 1227.93 779.48)" stroke="#0000ff">8G</text><text transform="matrix(0.47237 -0.13503 -0.03502 0.50392 1275.83 765.79)" stroke="#ff00ff">8H</text><path d="M682.78 287.45 L701.61 300.91 L705.22 357.18 L686.53 342.43 Z" fill="#ffffff"/><path d="M701.61 300.91 L721.48 315.11 L724.93 372.72 L705.22 357.18 Z" fill="#ff0000"/><path d="M721.48 315.11 L742.48 330.12 L745.74 389.14 L724.93 372.72 Z" fill="#ffff00"/><path d="M742.48 330.12 L764.70 346.00 L767.74 406.50 L745.74 389.14 Z" fill="#00ff00"/><path d="M764.70 346.00 L788.26 362.85 L791.06 424.90 L767.74 406.50 Z" fill="#00ffff"/><path d="M788.26 362.85 L813.28 380.73 L815.79 444.41 L791.06 424.90 Z" fill="#0000ff"/><path d="M813.28 380.73 L839.91 399.76 L842.09 465.16 L815.79 444.41 Z" fill="#ff00ff"/><path d="M839.91 399.76 L868.29 420.05 L870.10 487.26 L842.09 465.16 Z" fill="#808080"/><path d="M686.53 342.43 L705.22 357.18 L708.74 412.02 L690.20 396.06 Z" fill="#ff0000"/><path d="M705.22 357.18 L724.93 372.72 L728.29 428.83 L708.74 412.02 Z" fill="#ffff00"/><path d="M724.93 372.72 L745.74 389.14 L748.91 446.58 L728.29 428.83 Z" fill="#00ff00"/><path d="M745.74 389.14 L767.74 406.50 L770.70 465.34 L748.91 446.58 Z" fill="#00ffff"/><path d="M767.74 406.50 L791.06 424.90 L793.77 485.19 L770.70 465.34 Z" fill="#0000ff"/><path d="M791.06 424.90 L815.79 444.41 L818.23 506.24 L793.77 485.19 Z" fill="#ff00ff"/><path d="M815.79 444.41 L842.09 465.16 L844.21 528.59 L818.23 506.24 Z" fill="#808080"/><path d="M842.09 465.16 L870.10 487.26 L871.85 552.38 L844.21 528.59 Z" fill="#ffffff"/><path d="M690.20 396.06 L708.74 412.02 L712.18 465.48 L693.77 448.37 Z" fill="#ffff00"/><path d="M708.74 412.02 L728.29 428.83 L731.56 483.50 L712.18 465.48 Z" fill="#00ff00"/><path d="M728.29 428.83 L748.91 446.58 L752.00 502.51 L731.56 483.50 Z" fill="#00ffff"/><path d="M748.91 446.58 L770.70 465.34 L773.59 522.58 L752.00 502.51 Z" fill="#0000ff"/><path d="M770.70 465.34 L793.77 485.19 L796.42 543.80 L773.59 522.58 Z" fill="#ff00ff"/><path d="M793.77 485.19 L818.23 506.24 L820.60 566.29 L796.42 543.80 Z" fill="#808080"/><path d="M818.23 506.24 L844.21 528.59 L846.27 590.15 L820.60 566.29 Z" fill="#ffffff"/><path d="M844.21 528.59 L871.85 552.38 L873.55 615.51 L846.27 590.15 Z" fill="#ff0000"/><path d="M693.77 448.37 L712.18 465.48 L715.52 517.63 L697.26 499.42 Z" fill="#00ff00"/><path d="M712.18 465.48 L731.56 483.50 L734.75 536.79 L715.52 517.63 Z" fill="#00ffff"/><path d="M731.56 483.50 L752.00 502.51 L755.01 556.98 L734.75 536.79 Z" fill="#0000ff"/><path d="M752.00 502.51 L773.59 522.58 L776.39 578.28 L755.01 556.98 Z" fill="#ff00ff"/><path d="M773.59 522.58 L796.42 543.80 L798.98 600.80 L776.39 578.28 Z" fill="#808080"/><path d="M796.42 543.80 L820.60 566.29 L822.90 624.63 L798.98 600.80 Z" fill="#ffffff"/><path d="M820.60 566.29 L846.27 590.15 L848.26 649.90 L822.90 624.63 Z" fill="#ff0000"/><path d="M846.27 590.15 L873.55 615.51 L875.20 676.75 L848.26 649.90 Z" fill="#ffff00"/><path d="M697.26 499.42 L715.52 517.63 L718.79 568.50 L700.66 549.26 Z" fill="#00ffff"/><path d="M715.52 517.63 L734.75 536.79 L737.86 588.74 L718.79 568.50 Z" fill="#0000ff"/><path d="M734.75 536.79 L755.01 556.98 L757.94 610.04 L737.86 588.74 Z" fill="#ff00ff"/><path d="M755.01 556.98 L776.39 578.28 L779.12 632.52 L757.94 610.04 Z" fill="#808080"/><path d="M776.39 578.28 L798.98 600.80 L801.48 656.25 L779.12 632.52 Z" fill="#ffffff"/><path d="M798.98 600.80 L822.90 624.63 L825.14 681.35 L801.48 656.25 Z" fill="#ff0000"/><path d="M822.90 624.63 L848.26 649.90 L850.20 707.94 L825.14 681.35 Z" fill="#ffff00"/><path d="M848.26 649.90 L875.20 676.75 L876.80 736.16 L850.20 707.94 Z" fill="#00ff00"/><path d="M700.66 549.26 L718.79 568.50 L721.98 618.15 L703.98 597.93 Z" fill="#0000ff"/><path d="M718.79 568.50 L737.86 588.74 L740.89 639.40 L721.98 618.15 Z" fill="#ff00ff"/><path d="M737.86 588.74 L757.94 610.04 L760.80 661.77 L740.89 639.40 Z" fill="#808080"/><path d="M757.94 610.04 L779.12 632.52 L781.78 685.34 L760.80 661.77 Z" fill="#ffffff"/><path d="M779.12 632.52 L801.48 656.25 L803.92 710.21 L781.78 685.34 Z" fill="#ff0000"/><path d="M801.48 656.25 L825.14 681.35 L827.31 736.50 L803.92 710.21 Z" fill="#ffff00"/><path d="M825.14 681.35 L850.20 707.94 L852.08 764.33 L827.31 736.50 Z" fill="#00ff00"/><path d="M850.20 707.94 L876.80 736.16 L878.35 793.84 L852.08 764.33 Z" fill="#00ffff"/><path d="M703.98 597.93 L721.98 618.15 L725.09 666.61 L707.23 645.46 Z" fill="#ff00ff"/><path d="M721.98 618.15 L740.89 639.40 L743.85 688.82 L725.09 666.61 Z" fill="#808080"/><path d="M740.89 639.40 L760.80 661.77 L763.58 712.19 L743.85 688.82 Z" fill="#ffffff"/><path d="M760.80 661.77 L781.78 685.34 L784.37 736.80 L763.58 712.19 Z" fill="#ff0000"/><path d="M781.78 685.34 L803.92 710.21 L806.28 762.75 L784.37 736.80 Z" fill="#ffff00"/><path d="M803.92 710.21 L827.31 736.50 L829.43 790.16 L806.28 762.75 Z" fill="#00ff00"/><path d="M827.31 736.50 L852.08 764.33 L853.92 819.15 L829.43 790.16 Z" fill="#00ffff"/><path d="M852.08 764.33 L878.35 793.84 L879.86 849.86 L853.92 819.15 Z" fill="#0000ff"/><path d="M707.23 645.46 L725.09 666.61 L728.13 713.93 L710.40 691.90 Z" fill="#808080"/><path d="M725.09 666.61 L743.85 688.82 L746.74 737.06 L728.13 713.93 Z" fill="#ffffff"/><path d="M743.85 688.82 L763.58 712.19 L766.30 761.36 L746.74 737.06 Z" fill="#ff0000"/><path d="M763.58 712.19 L784.37 736.80 L786.89 786.95 L766.30 761.36 Z" fill="#ffff00"/><path d="M784.37 736.80 L806.28 762.75 L808.59 813.91 L786.89 786.95 Z" fill="#00ff00"/><path d="M806.28 762.75 L829.43 790.16 L831.49 842.37 L808.59 813.91 Z" fill="#00ffff"/><path d="M829.43 790.16 L853.92 819.15 L855.70 872.45 L831.49 842.37 Z" fill="#0000ff"/><path d="M853.92 819.15 L879.86 849.86 L881.32 904.29 L855.70 872.45 Z" fill="#ff00ff"/><line x1="682.78" y1="287.45" x2="710.40" y2="691.90" stroke="rgba(0,0,0,0.45)" stroke-width="1.00"/><line x1="682.78" y1="287.45" x2="868.29" y2="420.05" stroke="rgba(0,0,0,1.00)" stroke-width="1.80"/><line x1="701.61" y1="300.91" x2="728.13" y2="713.93" stroke="rgba(0,0,0,0.45)" stroke-width="1.00"/><line x1="686.53" y1="342.43" x2="870.10" y2="487.26" stroke="rgba(0,0,0,1.00)" stroke-width="1.80"/><line x1="721.48" y1="315.11" x2="746.74" y2="737.06" stroke="rgba(0,0,0,0.45)" stroke-width="1.00"/><line x1="690.20" y1="396.06" x2="871.85" y2="552.38" stroke="rgba(0,0,0,1.00)" stroke-width="1.80"/><line x1="742.48" y1="330.12" x2="766.30" y2="761.36" stroke="rgba(0,0,0,0.45)" stroke-width="1.00"/><line x1="693.77" y1="448.37" x2="873.55" y2="615.51" stroke="rgba(0,0,0,1.00)" stroke-width="1.80"/><line x1="764.70" y1="346.00" x2="786.89" y2="786.95" stroke="rgba(0,0,0,0.45)" stroke-width="1.00"/><line x1="697.26" y1="499.42" x2="875.20" y2="676.75" stroke="rgba(0,0,0,1.00)" stroke-width="1.80"/><line x1="788.26" y1="362.85" x2="808.59" y2="813.91" stroke="rgba(0,0,0,0.45)" stroke-width="1.00"/><line x1="700.66" y1="549.26" x2="876.80" y2="736.16" stroke="rgba(0,0,0,1.00)" stroke-width="1.80"/><line x1="813.28" y1="380.73" x2="831.49" y2="842.37" stroke="rgba(0,0,0,0.45)" stroke-width="1.00"/><line x1="703.98" y1="597.93" x2="878.35" y2="793.84" stroke="rgba(0,0,0,1.00)" stroke-width="1.80"/><line x1="839.91" y1="399.76" x2="855.70" y2="872.45" stroke="rgba(0,0,0,0.45)" stroke-width="1.00"/><line x1="707.23" y1="645.46" x2="879.86" y2="849.86" stroke="rgba(0,0,0,1.00)" stroke-width="1.80"/><line x1="868.29" y1="420.05" x2="881.32" y2="904.29" stroke="rgba(0,0,0,0.45)" stroke-width="1.00"/><line x1="710.40" y1="691.90" x2="881.32" y2="904.29" stroke="rgba(0,0,0,1.00)" stroke-width="1.80"/><text transform="matrix(0.18751 0.14147 0.03683 0.55572 694.04 323.74)" stroke="#ffffff">1A</text><text transform="matrix(0.19779 0.14922 0.03531 0.56884 713.29 338.27)" stroke="#ff0000">1B</text><text transform="matrix(0.20893 0.15762 0.03355 0.58258 733.62 353.61)" stroke="#ffff00">1C</text><text transform="matrix(0.22104 0.16676 0.03154 0.59698 755.11 369.82)" stroke="#00ff00">1D</text><text transform="matrix(0.23423 0.17671 0.02922 0.61210 777.87 386.99)" stroke="#00ffff">1E</text><text transform="matrix(0.24865 0.18759 0.02657 0.62798 802.00 405.20)" stroke="#0000ff">1F</text><text transform="matrix(0.26443 0.19950 0.02352 0.64468 827.64 424.54)" stroke="#ff00ff">1G</text><text transform="matrix(0.28177 0.21258 0.02001 0.66226 854.94 445.13)" stroke="#808080">1H</text><text transform="matrix(0.18610 0.15395 0.03591 0.54182 697.67 378.62)" stroke="#ff0000">2A</text><text transform="matrix(0.19616 0.16227 0.03440 0.55424 716.78 394.42)" stroke="#ffff00">2B</text><text transform="matrix(0.20706 0.17129 0.03267 0.56722 736.93 411.09)" stroke="#00ff00">2C</text><text transform="matrix(0.21890 0.18108 0.03068 0.58080 758.22 428.71)" stroke="#00ffff">2D</text><text transform="matrix(0.23178 0.19174 0.02841 0.59503 780.75 447.34)" stroke="#0000ff">2E</text><text transform="matrix(0.24583 0.20336 0.02581 0.60994 804.62 467.08)" stroke="#ff00ff">2F</text><text transform="matrix(0.26120 0.21607 0.02282 0.62560 829.96 488.05)" stroke="#808080">2G</text><text transform="matrix(0.27806 0.23002 0.01940 0.64204 856.91 510.34)" stroke="#ffffff">2H</text><text transform="matrix(0.18469 0.16576 0.03502 0.52844 701.22 432.13)" stroke="#ffff00">3A</text><text transform="matrix(0.19455 0.17461 0.03353 0.54019 720.17 449.14)" stroke="#00ff00">3B</text><text transform="matrix(0.20522 0.18419 0.03182 0.55245 740.16 467.07)" stroke="#00ffff">3C</text><text transform="matrix(0.21679 0.19457 0.02986 0.56526 761.25 486.00)" stroke="#0000ff">3D</text><text transform="matrix(0.22937 0.20586 0.02763 0.57866 783.55 506.02)" stroke="#ff00ff">3E</text><text transform="matrix(0.24308 0.21816 0.02507 0.59267 807.16 527.21)" stroke="#808080">3F</text><text transform="matrix(0.25805 0.23160 0.02216 0.60735 832.21 549.69)" stroke="#ffffff">3G</text><text transform="matrix(0.27445 0.24632 0.01882 0.62273 858.82 573.57)" stroke="#ff0000">3H</text><text transform="matrix(0.18330 0.17696 0.03417 0.51554 704.68 484.32)" stroke="#00ff00">4A</text><text transform="matrix(0.19296 0.18629 0.03269 0.52667 723.49 502.48)" stroke="#00ffff">4B</text><text transform="matrix(0.20341 0.19637 0.03100 0.53826 743.30 521.60)" stroke="#0000ff">4C</text><text transform="matrix(0.21472 0.20729 0.02907 0.55034 764.20 541.78)" stroke="#ff00ff">4D</text><text transform="matrix(0.22701 0.21915 0.02688 0.56296 786.27 563.09)" stroke="#808080">4E</text><text transform="matrix(0.24038 0.23206 0.02437 0.57613 809.63 585.64)" stroke="#ffffff">4F</text><text transform="matrix(0.25496 0.24614 0.02152 0.58989 834.39 609.54)" stroke="#ff0000">4G</text><text transform="matrix(0.27092 0.26155 0.01826 0.60429 860.67 634.92)" stroke="#ffff00">4H</text><text transform="matrix(0.18193 0.18757 0.03335 0.50312 708.05 535.25)" stroke="#00ffff">5A</text><text transform="matrix(0.19139 0.19733 0.03188 0.51365 726.71 554.49)" stroke="#0000ff">5B</text><text transform="matrix(0.20162 0.20787 0.03021 0.52460 746.36 574.74)" stroke="#ff00ff">5C</text><text transform="matrix(0.21268 0.21928 0.02832 0.53601 767.06 596.09)" stroke="#808080">5D</text><text transform="matrix(0.22468 0.23165 0.02616 0.54789 788.92 618.63)" stroke="#ffffff">5E</text><text transform="matrix(0.23773 0.24511 0.02370 0.56027 812.04 642.46)" stroke="#ff0000">5F</text><text transform="matrix(0.25195 0.25976 0.02091 0.57318 836.51 667.69)" stroke="#ffff00">5G</text><text transform="matrix(0.26748 0.27578 0.01773 0.58664 862.47 694.46)" stroke="#00ff00">5H</text><text transform="matrix(0.18056 0.19762 0.03255 0.49113 711.35 584.96)" stroke="#0000ff">6A</text><text transform="matrix(0.18984 0.20777 0.03110 0.50110 729.86 605.22)" stroke="#ff00ff">6B</text><text transform="matrix(0.19985 0.21873 0.02946 0.51146 749.34 626.54)" stroke="#808080">6C</text><text transform="matrix(0.21068 0.23058 0.02759 0.52222 769.86 649.00)" stroke="#ffffff">6D</text><text transform="matrix(0.22241 0.24342 0.02547 0.53341 791.51 672.69)" stroke="#ff0000">6E</text><text transform="matrix(0.23514 0.25736 0.02306 0.54505 814.37 697.72)" stroke="#ffff00">6F</text><text transform="matrix(0.24900 0.27253 0.02033 0.55716 838.57 724.20)" stroke="#00ff00">6G</text><text transform="matrix(0.26413 0.28908 0.01722 0.56977 864.22 752.27)" stroke="#00ffff">6H</text><text transform="matrix(0.17921 0.20715 0.03178 0.47957 714.56 633.49)" stroke="#ff00ff">7A</text><text transform="matrix(0.18831 0.21766 0.03035 0.48901 732.93 654.72)" stroke="#808080">7B</text><text transform="matrix(0.19811 0.22899 0.02873 0.49880 752.25 677.05)" stroke="#ffffff">7C</text><text transform="matrix(0.20870 0.24124 0.02689 0.50896 772.58 700.55)" stroke="#ff0000">7D</text><text transform="matrix(0.22017 0.25449 0.02480 0.51950 794.02 725.33)" stroke="#ffff00">7E</text><text transform="matrix(0.23260 0.26886 0.02244 0.53045 816.65 751.49)" stroke="#00ff00">7F</text><text transform="matrix(0.24612 0.28449 0.01976 0.54181 840.58 779.14)" stroke="#00ffff">7G</text><text transform="matrix(0.26086 0.30152 0.01673 0.55360 865.91 808.43)" stroke="#0000ff">7H</text><text transform="matrix(0.17787 0.21617 0.03105 0.46841 717.71 680.89)" stroke="#808080">8A</text><text transform="matrix(0.18679 0.22701 0.02963 0.47736 735.93 703.04)" stroke="#ffffff">8B</text><text transform="matrix(0.19640 0.23869 0.02803 0.48661 755.09 726.32)" stroke="#ff0000">8C</text><text transform="matrix(0.20676 0.25129 0.02621 0.49620 775.24 750.81)" stroke="#ffff00">8D</text><text transform="matrix(0.21797 0.26491 0.02416 0.50613 796.47 776.61)" stroke="#00ff00">8E</text><text transform="matrix(0.23012 0.27967 0.02185 0.51642 818.86 803.83)" stroke="#00ffff">8F</text><text transform="matrix(0.24331 0.29570 0.01923 0.52708 842.53 832.58)" stroke="#0000ff">8G</text><text transform="matrix(0.25766 0.31315 0.01626 0.53812 867.56 863.01)" stroke="#ff00ff">8H</text><path d="M1330.46 343.73 L1278.64 352.29 L1241.69 336.02 L1292.59 327.93 Z" fill="#ffffff"/><path d="M1278.64 352.29 L1225.28 361.10 L1189.30 344.34 L1241.69 336.02 Z" fill="#ff0000"/><path d="M1225.28 361.10 L1170.29 370.18 L1135.38 352.91 L1189.30 344.34 Z" fill="#ffff00"/><path d="M1170.29 370.18 L1113.61 379.54 L1079.84 361.74 L1135.38 352.91 Z" fill="#00ff00"/><path d="M1113.61 379.54 L1055.16 389.19 L1022.62 370.83 L1079.84 361.74 Z" fill="#00ffff"/><path d="M1055.16 389.19 L994.85 399.15 L963.63 380.21 L1022.62 370.83 Z" fill="#0000ff"/><path d="M994.85 399.15 L932.59 409.43 L902.80 389.88 L963.63 380.21 Z" fill="#ff00ff"/><path d="M932.59 409.43 L868.29 420.05 L840.03 399.85 L902.80 389.88 Z" fill="#808080"/><path d="M1292.59 327.93 L1241.69 336.02 L1206.75 320.63 L1256.76 312.97 Z" fill="#ff0000"/><path d="M1241.69 336.02 L1189.30 344.34 L1155.33 328.51 L1206.75 320.63 Z" fill="#ffff00"/><path d="M1189.30 344.34 L1135.38 352.91 L1102.43 336.61 L1155.33 328.51 Z" fill="#00ff00"/><path d="M1135.38 352.91 L1079.84 361.74 L1048.00 344.95 L1102.43 336.61 Z" fill="#00ffff"/><path d="M1079.84 361.74 L1022.62 370.83 L991.96 353.54 L1048.00 344.95 Z" fill="#0000ff"/><path d="M1022.62 370.83 L963.63 380.21 L934.25 362.38 L991.96 353.54 Z" fill="#ff00ff"/><path d="M963.63 380.21 L902.80 389.88 L874.79 371.49 L934.25 362.38 Z" fill="#808080"/><path d="M902.80 389.88 L840.03 399.85 L813.49 380.88 L874.79 371.49 Z" fill="#ffffff"/><path d="M1256.76 312.97 L1206.75 320.63 L1173.67 306.07 L1222.81 298.81 Z" fill="#ffff00"/><path d="M1206.75 320.63 L1155.33 328.51 L1123.18 313.54 L1173.67 306.07 Z" fill="#00ff00"/><path d="M1155.33 328.51 L1102.43 336.61 L1071.28 321.21 L1123.18 313.54 Z" fill="#00ffff"/><path d="M1102.43 336.61 L1048.00 344.95 L1017.92 329.10 L1071.28 321.21 Z" fill="#0000ff"/><path d="M1048.00 344.95 L991.96 353.54 L963.03 337.21 L1017.92 329.10 Z" fill="#ff00ff"/><path d="M991.96 353.54 L934.25 362.38 L906.55 345.57 L963.03 337.21 Z" fill="#808080"/><path d="M934.25 362.38 L874.79 371.49 L848.39 354.16 L906.55 345.57 Z" fill="#ffffff"/><path d="M874.79 371.49 L813.49 380.88 L788.50 363.02 L848.39 354.16 Z" fill="#ff0000"/><path d="M1222.81 298.81 L1173.67 306.07 L1142.31 292.26 L1190.60 285.36 Z" fill="#00ff00"/><path d="M1173.67 306.07 L1123.18 313.54 L1092.72 299.35 L1142.31 292.26 Z" fill="#00ffff"/><path d="M1123.18 313.54 L1071.28 321.21 L1041.80 306.62 L1092.72 299.35 Z" fill="#0000ff"/><path d="M1071.28 321.21 L1017.92 329.10 L989.47 314.10 L1041.80 306.62 Z" fill="#ff00ff"/><path d="M1017.92 329.10 L963.03 337.21 L935.68 321.78 L989.47 314.10 Z" fill="#808080"/><path d="M963.03 337.21 L906.55 345.57 L880.38 329.69 L935.68 321.78 Z" fill="#ffffff"/><path d="M906.55 345.57 L848.39 354.16 L823.49 337.81 L880.38 329.69 Z" fill="#ff0000"/><path d="M848.39 354.16 L788.50 363.02 L764.94 346.18 L823.49 337.81 Z" fill="#ffff00"/><path d="M1190.60 285.36 L1142.31 292.26 L1112.53 279.15 L1159.99 272.59 Z" fill="#00ffff"/><path d="M1142.31 292.26 L1092.72 299.35 L1063.83 285.88 L1112.53 279.15 Z" fill="#0000ff"/><path d="M1092.72 299.35 L1041.80 306.62 L1013.84 292.79 L1063.83 285.88 Z" fill="#ff00ff"/><path d="M1041.80 306.62 L989.47 314.10 L962.51 299.89 L1013.84 292.79 Z" fill="#808080"/><path d="M989.47 314.10 L935.68 321.78 L909.79 307.18 L962.51 299.89 Z" fill="#ffffff"/><path d="M935.68 321.78 L880.38 329.69 L855.62 314.66 L909.79 307.18 Z" fill="#ff0000"/><path d="M880.38 329.69 L823.49 337.81 L799.94 322.36 L855.62 314.66 Z" fill="#ffff00"/><path d="M823.49 337.81 L764.94 346.18 L742.69 330.27 L799.94 322.36 Z" fill="#00ff00"/><path d="M1159.99 272.59 L1112.53 279.15 L1084.22 266.69 L1130.88 260.44 Z" fill="#0000ff"/><path d="M1112.53 279.15 L1063.83 285.88 L1036.37 273.09 L1084.22 266.69 Z" fill="#ff00ff"/><path d="M1063.83 285.88 L1013.84 292.79 L987.29 279.66 L1036.37 273.09 Z" fill="#808080"/><path d="M1013.84 292.79 L962.51 299.89 L936.93 286.41 L987.29 279.66 Z" fill="#ffffff"/><path d="M962.51 299.89 L909.79 307.18 L885.24 293.33 L936.93 286.41 Z" fill="#ff0000"/><path d="M909.79 307.18 L855.62 314.66 L832.17 300.43 L885.24 293.33 Z" fill="#ffff00"/><path d="M855.62 314.66 L799.94 322.36 L777.65 307.73 L832.17 300.43 Z" fill="#00ff00"/><path d="M799.94 322.36 L742.69 330.27 L721.64 315.23 L777.65 307.73 Z" fill="#00ffff"/><path d="M1130.88 260.44 L1084.22 266.69 L1057.27 254.82 L1103.15 248.87 Z" fill="#ff00ff"/><path d="M1084.22 266.69 L1036.37 273.09 L1010.25 260.92 L1057.27 254.82 Z" fill="#808080"/><path d="M1036.37 273.09 L987.29 279.66 L962.05 267.18 L1010.25 260.92 Z" fill="#ffffff"/><path d="M987.29 279.66 L936.93 286.41 L912.63 273.60 L962.05 267.18 Z" fill="#ff0000"/><path d="M936.93 286.41 L885.24 293.33 L861.93 280.18 L912.63 273.60 Z" fill="#ffff00"/><path d="M885.24 293.33 L832.17 300.43 L809.92 286.93 L861.93 280.18 Z" fill="#00ff00"/><path d="M832.17 300.43 L777.65 307.73 L756.52 293.86 L809.92 286.93 Z" fill="#00ffff"/><path d="M777.65 307.73 L721.64 315.23 L701.70 300.97 L756.52 293.86 Z" fill="#0000ff"/><path d="M1103.15 248.87 L1057.27 254.82 L1031.58 243.51 L1076.70 237.83 Z" fill="#808080"/><path d="M1057.27 254.82 L1010.25 260.92 L985.37 249.33 L1031.58 243.51 Z" fill="#ffffff"/><path d="M1010.25 260.92 L962.05 267.18 L938.03 255.30 L985.37 249.33 Z" fill="#ff0000"/><path d="M962.05 267.18 L912.63 273.60 L889.51 261.41 L938.03 255.30 Z" fill="#ffff00"/><path d="M912.63 273.60 L861.93 280.18 L839.77 267.67 L889.51 261.41 Z" fill="#00ff00"/><path d="M861.93 280.18 L809.92 286.93 L788.77 274.10 L839.77 267.67 Z" fill="#00ffff"/><path d="M809.92 286.93 L756.52 293.86 L736.46 280.69 L788.77 274.10 Z" fill="#0000ff"/><path d="M756.52 293.86 L701.70 300.97 L682.78 287.45 L736.46 280.69 Z" fill="#ff00ff"/><line x1="1330.46" y1="343.73" x2="1076.70" y2="237.83" stroke="rgba(0,0,0,1.00)" stroke-width="1.60"/><line x1="1330.46" y1="343.73" x2="868.29" y2="420.05" stroke="rgba(0,0,0,0.45)" stroke-width="1.00"/><line x1="1278.64" y1="352.29" x2="1031.58" y2="243.51" stroke="rgba(0,0,0,1.00)" stroke-width="1.60"/><line x1="1292.59" y1="327.93" x2="840.03" y2="399.85" stroke="rgba(0,0,0,0.45)" stroke-width="1.00"/><line x1="1225.28" y1="361.10" x2="985.37" y2="249.33" stroke="rgba(0,0,0,1.00)" stroke-width="1.60"/><line x1="1256.76" y1="312.97" x2="813.49" y2="380.88" stroke="rgba(0,0,0,0.45)" stroke-width="1.00"/><line x1="1170.29" y1="370.18" x2="938.03" y2="255.30" stroke="rgba(0,0,0,1.00)" stroke-width="1.60"/><line x1="1222.81" y1="298.81" x2="788.50" y2="363.02" stroke="rgba(0,0,0,0.45)" stroke-width="1.00"/><line x1="1113.61" y1="379.54" x2="889.51" y2="261.41" stroke="rgba(0,0,0,1.00)" stroke-width="1.60"/><line x1="1190.60" y1="285.36" x2="764.94" y2="346.18" stroke="rgba(0,0,0,0.45)" stroke-width="1.00"/><line x1="1055.16" y1="389.19" x2="839.77" y2="267.67" stroke="rgba(0,0,0,1.00)" stroke-width="1.60"/><line x1="1159.99" y1="272.59" x2="742.69" y2="330.27" stroke="rgba(0,0,0,0.45)" stroke-width="1.00"/><line x1="994.85" y1="399.15" x2="788.77" y2="274.10" stroke="rgba(0,0,0,1.00)" stroke-width="1.60"/><line x1="1130.88" y1="260.44" x2="721.64" y2="315.23" stroke="rgba(0,0,0,0.45)" stroke-width="1.00"/><line x1="932.59" y1="409.43" x2="736.46" y2="280.69" stroke="rgba(0,0,0,1.00)" stroke-width="1.60"/><line x1="1103.15" y1="248.87" x2="701.70" y2="300.97" stroke="rgba(0,0,0,0.45)" stroke-width="1.00"/><line x1="868.29" y1="420.05" x2="682.78" y2="287.45" stroke="rgba(0,0,0,1.00)" stroke-width="1.60"/><line x1="1076.70" y1="237.83" x2="682.78" y2="287.45" stroke="rgba(0,0,0,0.45)" stroke-width="1.00"/><text transform="matrix(-0.51328 0.08304 -0.37351 -0.16005 1284.64 339.37)" stroke="#ffffff">1A</text><text transform="matrix(-0.52838 0.08549 -0.36403 -0.16480 1232.57 347.79)" stroke="#ff0000">1B</text><text transform="matrix(-0.54416 0.08804 -0.35382 -0.16977 1178.94 356.47)" stroke="#ffff00">1C</text><text transform="matrix(-0.56066 0.09071 -0.34282 -0.17496 1123.71 365.40)" stroke="#00ff00">1D</text><text transform="matrix(-0.57792 0.09350 -0.33099 -0.18040 1066.79 374.61)" stroke="#00ffff">1E</text><text transform="matrix(-0.59599 0.09642 -0.31824 -0.18609 1008.10 384.11)" stroke="#0000ff">1F</text><text transform="matrix(-0.61492 0.09949 -0.30453 -0.19205 947.56 393.90)" stroke="#ff00ff">1G</text><text transform="matrix(-0.63476 0.10270 -0.28976 -0.19830 885.08 404.01)" stroke="#808080">1H</text><text transform="matrix(-0.50425 0.07858 -0.35326 -0.15137 1248.32 323.80)" stroke="#ff0000">2A</text><text transform="matrix(-0.51868 0.08083 -0.34401 -0.15574 1197.18 331.77)" stroke="#ffff00">2B</text><text transform="matrix(-0.53372 0.08317 -0.33409 -0.16030 1144.56 339.97)" stroke="#00ff00">2C</text><text transform="matrix(-0.54944 0.08562 -0.32343 -0.16507 1090.41 348.41)" stroke="#00ffff">2D</text><text transform="matrix(-0.56586 0.08818 -0.31199 -0.17004 1034.65 357.10)" stroke="#0000ff">2E</text><text transform="matrix(-0.58302 0.09085 -0.29971 -0.17525 977.21 366.05)" stroke="#ff00ff">2F</text><text transform="matrix(-0.60098 0.09365 -0.28652 -0.18070 918.02 375.27)" stroke="#808080">2G</text><text transform="matrix(-0.61978 0.09658 -0.27237 -0.18640 856.99 384.78)" stroke="#ffffff">2H</text><text transform="matrix(-0.49545 0.07447 -0.33461 -0.14338 1213.94 309.07)" stroke="#ffff00">3A</text><text transform="matrix(-0.50923 0.07654 -0.32560 -0.14740 1163.71 316.62)" stroke="#00ff00">3B</text><text transform="matrix(-0.52360 0.07870 -0.31596 -0.15160 1112.07 324.38)" stroke="#00ffff">3C</text><text transform="matrix(-0.53858 0.08095 -0.30564 -0.15598 1058.97 332.36)" stroke="#0000ff">3D</text><text transform="matrix(-0.55421 0.08330 -0.29458 -0.16056 1004.34 340.57)" stroke="#ff00ff">3E</text><text transform="matrix(-0.57054 0.08576 -0.28274 -0.16533 948.10 349.03)" stroke="#808080">3F</text><text transform="matrix(-0.58759 0.08832 -0.27007 -0.17032 890.20 357.73)" stroke="#ffffff">3G</text><text transform="matrix(-0.60543 0.09100 -0.25650 -0.17554 830.56 366.69)" stroke="#ff0000">3H</text><text transform="matrix(-0.48686 0.07068 -0.31740 -0.13600 1181.35 295.11)" stroke="#00ff00">4A</text><text transform="matrix(-0.50004 0.07259 -0.30863 -0.13972 1132.01 302.27)" stroke="#00ffff">4B</text><text transform="matrix(-0.51377 0.07458 -0.29927 -0.14360 1081.32 309.63)" stroke="#0000ff">4C</text><text transform="matrix(-0.52807 0.07666 -0.28927 -0.14763 1029.24 317.19)" stroke="#ff00ff">4D</text><text transform="matrix(-0.54297 0.07882 -0.27859 -0.15184 975.69 324.96)" stroke="#808080">4E</text><text transform="matrix(-0.55852 0.08108 -0.26718 -0.15623 920.62 332.96)" stroke="#ffffff">4F</text><text transform="matrix(-0.57474 0.08343 -0.25499 -0.16081 863.96 341.18)" stroke="#ff0000">4G</text><text transform="matrix(-0.59168 0.08589 -0.24197 -0.16560 805.65 349.65)" stroke="#ffff00">4H</text><text transform="matrix(-0.47850 0.06717 -0.30148 -0.12918 1150.42 281.85)" stroke="#00ffff">5A</text><text transform="matrix(-0.49112 0.06894 -0.29296 -0.13262 1101.94 288.66)" stroke="#0000ff">5B</text><text transform="matrix(-0.50425 0.07078 -0.28387 -0.13621 1052.18 295.64)" stroke="#ff00ff">5C</text><text transform="matrix(-0.51791 0.07270 -0.27419 -0.13993 1001.07 302.81)" stroke="#808080">5D</text><text transform="matrix(-0.53213 0.07470 -0.26387 -0.14382 948.58 310.18)" stroke="#ffffff">5E</text><text transform="matrix(-0.54695 0.07678 -0.25287 -0.14786 894.63 317.76)" stroke="#ff0000">5F</text><text transform="matrix(-0.56239 0.07894 -0.24115 -0.15208 839.16 325.54)" stroke="#ffff00">5G</text><text transform="matrix(-0.57850 0.08121 -0.22865 -0.15648 782.13 333.55)" stroke="#00ff00">5H</text><text transform="matrix(-0.47035 0.06392 -0.28673 -0.12286 1121.01 269.25)" stroke="#0000ff">6A</text><text transform="matrix(-0.48245 0.06556 -0.27844 -0.12605 1073.38 275.73)" stroke="#ff00ff">6B</text><text transform="matrix(-0.49501 0.06727 -0.26963 -0.12937 1024.51 282.37)" stroke="#808080">6C</text><text transform="matrix(-0.50808 0.06904 -0.26026 -0.13282 974.36 289.18)" stroke="#ffffff">6D</text><text transform="matrix(-0.52166 0.07089 -0.25028 -0.13641 922.88 296.18)" stroke="#ff0000">6E</text><text transform="matrix(-0.53580 0.07281 -0.23968 -0.14015 870.01 303.36)" stroke="#ffff00">6F</text><text transform="matrix(-0.55053 0.07481 -0.22840 -0.14404 815.70 310.74)" stroke="#00ff00">6G</text><text transform="matrix(-0.56586 0.07689 -0.21639 -0.14809 759.88 318.33)" stroke="#00ffff">6H</text><text transform="matrix(-0.46243 0.06089 -0.27304 -0.11699 1093.03 257.26)" stroke="#ff00ff">7A</text><text transform="matrix(-0.47403 0.06242 -0.26498 -0.11996 1046.22 263.43)" stroke="#808080">7B</text><text transform="matrix(-0.48607 0.06401 -0.25643 -0.12304 998.21 269.75)" stroke="#ffffff">7C</text><text transform="matrix(-0.49857 0.06565 -0.24736 -0.12624 948.99 276.23)" stroke="#ff0000">7D</text><text transform="matrix(-0.51156 0.06736 -0.23772 -0.12956 898.48 282.88)" stroke="#ffff00">7E</text><text transform="matrix(-0.52507 0.06914 -0.22749 -0.13302 846.66 289.71)" stroke="#00ff00">7F</text><text transform="matrix(-0.53912 0.07099 -0.21663 -0.13662 793.45 296.71)" stroke="#00ffff">7G</text><text transform="matrix(-0.55374 0.07292 -0.20510 -0.14036 738.82 303.91)" stroke="#0000ff">7H</text><text transform="matrix(-0.45472 0.05809 -0.26030 -0.11154 1066.37 245.84)" stroke="#808080">8A</text><text transform="matrix(-0.46585 0.05951 -0.25248 -0.11430 1020.35 251.72)" stroke="#ffffff">8B</text><text transform="matrix(-0.47739 0.06098 -0.24418 -0.11716 973.19 257.74)" stroke="#ff0000">8C</text><text transform="matrix(-0.48937 0.06251 -0.23539 -0.12013 924.86 263.92)" stroke="#ffff00">8D</text><text transform="matrix(-0.50181 0.06410 -0.22608 -0.12322 875.30 270.25)" stroke="#00ff00">8E</text><text transform="matrix(-0.51472 0.06575 -0.21621 -0.12643 824.48 276.74)" stroke="#00ffff">8F</text><text transform="matrix(-0.52814 0.06746 -0.20575 -0.12976 772.34 283.40)" stroke="#0000ff">8G</text><text transform="matrix(-0.54209 0.06925 -0.19466 -0.13322 718.83 290.23)" stroke="#ff00ff">8H</text></g></svg></div>
<div class="a" style="left:1736px;top:125px;width:184px;height:866px;background:#444"></div>
<div class="a" style="left:1736px;top:125px;width:3px;height:866px;background:#3a3a3a"></div>
<div class="a" style="left:1739px;top:128px;width:28px;height:25px;background:#393939;border:1px solid #222;border-bottom:none;border-radius:3px 3px 0 0"></div>
<div class="a" style="left:1768px;top:128px;width:28px;height:25px;background:#393939;border:1px solid #222;border-bottom:none;border-radius:3px 3px 0 0"></div>
<div class="a" style="left:1797px;top:128px;width:28px;height:25px;background:#393939;border:1px solid #222;border-bottom:none;border-radius:3px 3px 0 0"></div>
<div class="a" style="left:1826px;top:128px;width:28px;height:25px;background:#393939;border:1px solid #222;border-bottom:none;border-radius:3px 3px 0 0"></div>
<div class="a" style="left:1855px;top:128px;width:28px;height:25px;background:#393939;border:1px solid #222;border-bottom:none;border-radius:3px 3px 0 0"></div>
<div class="a" style="left:1884px;top:127px;width:29px;height:26px;background:#444;border:1px solid #222;border-bottom:none;border-radius:3px 3px 0 0"></div>
<div class="a" style="left:1739px;top:152px;width:145px;height:1px;background:#222"></div>
<div class="a" style="left:1912px;top:152px;width:8px;height:1px;background:#222"></div>
<svg class="a" style="left:1739px;top:128px" width="180" height="25">
<g transform="translate(14,12)"><circle r="5" fill="#fc3"/><circle r="2.5" fill="#fff"/><g stroke="#d33" stroke-width="1"><path d="M0 -8 V8 M-8 0 H8 M-5.5 -5.5 L5.5 5.5 M5.5 -5.5 L-5.5 5.5"/></g><circle r="3" fill="#ffe"/></g>
<path d="M35 20 q0 -12 13 -13" fill="none" stroke="#3a9ae8" stroke-width="4"/><path d="M35 20 q0 -12 13 -13" fill="none" stroke="#bfe" stroke-width="1"/><rect x="32" y="5" width="17" height="17" fill="none" stroke="#ccc" stroke-width="0.6"/>
<rect x="68" y="3" width="10" height="8" fill="#ddd"/><path d="M73 11 v3 M66 18 l7 -4 l7 4" stroke="#ddd" fill="none"/><rect x="64" y="17" width="5" height="5" fill="#ddd"/><rect x="71" y="17" width="5" height="5" fill="#ddd"/><rect x="78" y="17" width="5" height="5" fill="#ddd"/>
<circle cx="102" cy="12" r="8" fill="none" stroke="#ccc" stroke-width="2"/><circle cx="102" cy="12" r="4" fill="none" stroke="#ccc" stroke-width="1.5"/><circle cx="102" cy="12" r="1" fill="#ccc"/><path d="M93 5 q-3 7 0 14" fill="none" stroke="#777"/>
<rect x="119" y="5" width="20" height="14" fill="#eee" stroke="#999" stroke-width="0.6"/><rect x="125" y="8" width="7" height="7" fill="none" stroke="#333"/><path d="M125 22 h10" stroke="#bbb" stroke-width="1.5"/>
<path d="M152 21 l10 -11" stroke="#c87a5a" stroke-width="2.5"/><path d="M157 6 l6 -3 l6 4 l2 4 l-3 2 l-3 -3 l-4 2z" fill="#aaa"/>
</svg>
<div class="a" style="left:1747px;top:158px;width:147px;height:20px;background:#555;border-top:2px solid #111;border-left:2px solid #111;border-right:1px solid #4a4a4a;border-bottom:1px solid #4a4a4a"></div>
<div class="a" style="left:1898px;top:159px;width:15px;height:18px;background:#c8307f"></div>
<div class="a" style="left:1740px;top:183px;width:173px;height:1px;background:#1c1c1c"></div>
<div class="a" style="left:1913px;top:185px;width:1px;height:800px;background:#555"></div>
<div class="a" style="left:1744px;top:196px;width:166px;height:251px;border:1px solid #1e1e1e;border-top:none;box-shadow:inset 1px 0 0 #4c4c4c"></div>
<div class="a" style="left:1748px;top:188px;width:158px;height:16px;background:#3d3d3d;border:1px solid #6e6e6e"></div>
<div class="a" style="left:1752px;top:196px;width:5px;height:1px;background:#fff"></div>
<div class="t" style="left:1748px;top:189px;width:158px;text-align:center;color:#e8e8e8;font-size:11.5px">Utilities</div>
<div class="a" style="left:1756px;top:212px;width:56px;height:18px;background:#434343;border:1px solid #1e1e1e;border-top-color:#2a2a2a;border-left-color:#2a2a2a;box-shadow:inset 1px 1px 0 #555"></div>
<div class="t" style="left:1756px;top:214.0px;width:56px;text-align:center;color:#e4e4e4;font-size:11px">More...</div>
<div class="a" style="left:1817px;top:212px;width:57px;height:18px;background:#434343;border:1px solid #1e1e1e;border-top-color:#2a2a2a;border-left-color:#2a2a2a;box-shadow:inset 1px 1px 0 #555"></div>
<div class="t" style="left:1817px;top:214.0px;width:57px;text-align:center;color:#e4e4e4;font-size:11px">Sets</div>
<div class="a" style="left:1877px;top:212px;width:21px;height:18px;background:#434343;border:1px solid #222"></div>
<svg class="a" style="left:1879px;top:213px" width="17" height="16"><rect x="1" y="1" width="13" height="12" fill="#fff" stroke="#2233cc" stroke-width="1.5"/><rect x="1" y="1" width="13" height="3" fill="#2233cc"/><rect x="3" y="6" width="12" height="9" fill="#aaa" opacity="0.8"/></svg>
<div class="a" style="left:1756px;top:240px;width:142px;height:20px;background:#434343;border:1px solid #1e1e1e;border-top-color:#2a2a2a;border-left-color:#2a2a2a;box-shadow:inset 1px 1px 0 #555"></div>
<div class="t" style="left:1756px;top:243.1px;width:142px;text-align:center;color:#e4e4e4;font-size:11px">Simplygon</div>
<div class="a" style="left:1756px;top:263px;width:142px;height:20px;background:#434343;border:1px solid #1e1e1e;border-top-color:#2a2a2a;border-left-color:#2a2a2a;box-shadow:inset 1px 1px 0 #555"></div>
<div class="t" style="left:1756px;top:265.9px;width:142px;text-align:center;color:#e4e4e4;font-size:11px">Channel Info</div>
<div class="a" style="left:1756px;top:286px;width:142px;height:20px;background:#434343;border:1px solid #1e1e1e;border-top-color:#2a2a2a;border-left-color:#2a2a2a;box-shadow:inset 1px 1px 0 #555"></div>
<div class="t" style="left:1756px;top:288.8px;width:142px;text-align:center;color:#e4e4e4;font-size:11px">Asset Browser</div>
<div class="a" style="left:1756px;top:309px;width:142px;height:20px;background:#434343;border:1px solid #1e1e1e;border-top-color:#2a2a2a;border-left-color:#2a2a2a;box-shadow:inset 1px 1px 0 #555"></div>
<div class="t" style="left:1756px;top:311.6px;width:142px;text-align:center;color:#e4e4e4;font-size:11px">Assign Vertex Colors</div>
<div class="a" style="left:1756px;top:332px;width:142px;height:20px;background:#434343;border:1px solid #1e1e1e;border-top-color:#2a2a2a;border-left-color:#2a2a2a;box-shadow:inset 1px 1px 0 #555"></div>
<div class="t" style="left:1756px;top:334.5px;width:142px;text-align:center;color:#e4e4e4;font-size:11px">Measure</div>
<div class="a" style="left:1756px;top:355px;width:142px;height:20px;background:#434343;border:1px solid #1e1e1e;border-top-color:#2a2a2a;border-left-color:#2a2a2a;box-shadow:inset 1px 1px 0 #555"></div>
<div class="t" style="left:1756px;top:357.4px;width:142px;text-align:center;color:#e4e4e4;font-size:11px">Motion Capture</div>
<div class="a" style="left:1756px;top:377px;width:142px;height:20px;background:#434343;border:1px solid #1e1e1e;border-top-color:#2a2a2a;border-left-color:#2a2a2a;box-shadow:inset 1px 1px 0 #555"></div>
<div class="t" style="left:1756px;top:380.2px;width:142px;text-align:center;color:#e4e4e4;font-size:11px">Reset XForm</div>
<div class="a" style="left:1756px;top:400px;width:142px;height:20px;background:#3b79d6;border:1px solid #1e1e1e;border-top-color:#2a2a2a;border-left-color:#2a2a2a;box-shadow:inset 1px 1px 0 #555"></div>
<div class="t" style="left:1756px;top:403.1px;width:142px;text-align:center;color:#e4e4e4;font-size:11px">MAXScript</div>
<div class="a" style="left:1756px;top:423px;width:142px;height:20px;background:#434343;border:1px solid #1e1e1e;border-top-color:#2a2a2a;border-left-color:#2a2a2a;box-shadow:inset 1px 1px 0 #555"></div>
<div class="t" style="left:1756px;top:425.9px;width:142px;text-align:center;color:#e4e4e4;font-size:11px">Flight Studio (c)</div>
<div class="a" style="left:1744px;top:463px;width:166px;height:219px;border:1px solid #1e1e1e;border-top:none;box-shadow:inset 1px 0 0 #4c4c4c"></div>
<div class="a" style="left:1748px;top:455px;width:158px;height:16px;background:#3d3d3d;border:1px solid #6e6e6e"></div>
<div class="a" style="left:1752px;top:463px;width:5px;height:1px;background:#fff"></div>
<div class="t" style="left:1748px;top:456px;width:158px;text-align:center;color:#e8e8e8;font-size:11.5px">MAXScript</div>
<div class="a" style="left:1778px;top:484px;width:95px;height:20px;background:#434343;border:1px solid #1e1e1e;border-top-color:#2a2a2a;border-left-color:#2a2a2a;box-shadow:inset 1px 1px 0 #555"></div>
<div class="t" style="left:1778px;top:487.0px;width:95px;text-align:center;color:#e4e4e4;font-size:11px">Open Listener</div>
<div class="a" style="left:1778px;top:518px;width:95px;height:19px;background:#434343;border:1px solid #1e1e1e;border-top-color:#2a2a2a;border-left-color:#2a2a2a;box-shadow:inset 1px 1px 0 #555"></div>
<div class="t" style="left:1778px;top:521.0px;width:95px;text-align:center;color:#e4e4e4;font-size:11px">New Script</div>
<div class="a" style="left:1778px;top:544px;width:95px;height:19px;background:#434343;border:1px solid #1e1e1e;border-top-color:#2a2a2a;border-left-color:#2a2a2a;box-shadow:inset 1px 1px 0 #555"></div>
<div class="t" style="left:1778px;top:547.0px;width:95px;text-align:center;color:#e4e4e4;font-size:11px">Open Script</div>
<div class="a" style="left:1778px;top:571px;width:95px;height:19px;background:#434343;border:1px solid #1e1e1e;border-top-color:#2a2a2a;border-left-color:#2a2a2a;box-shadow:inset 1px 1px 0 #555"></div>
<div class="t" style="left:1778px;top:573.2px;width:95px;text-align:center;color:#e4e4e4;font-size:11px">Run Script</div>
<div class="t" style="left:1744px;top:601px;width:166px;text-align:center;color:#e4e4e4;font-size:11.5px">Utilities</div>
<div class="a" style="left:1764px;top:617px;width:125px;height:20px;background:#e8e8e8;border:1px solid #111"></div>
<div class="t" style="left:1767px;top:620.5px;width:103px;overflow:hidden;color:#111;font-size:11.5px">Convert to mr Area Lights</div>
<svg class="a" style="left:1873px;top:622px" width="12" height="10"><path d="M2 3 l4 4 l4 -4" stroke="#333" fill="none" stroke-width="1.2"/></svg>
<div class="a" style="left:1800px;top:653px;width:50px;height:20px;background:#434343;border:1px solid #1e1e1e;border-top-color:#2a2a2a;border-left-color:#2a2a2a;box-shadow:inset 1px 1px 0 #555"></div>
<div class="t" style="left:1800px;top:656.0px;width:50px;text-align:center;color:#e4e4e4;font-size:11px">Close</div>
<div class="a" style="left:1739px;top:690px;width:175px;height:294px;border-right:1px solid #555;border-bottom:1px solid #555"></div>
<div class="a" style="left:1737px;top:987px;width:183px;height:1px;background:#1c1c1c"></div>
<div class="a" style="left:244px;top:945px;width:1492px;height:19px;background:#444"></div>
<div class="a" style="left:245px;top:945px;width:15px;height:17px;background:#474747;border:1px solid #3a3a3a;border-bottom-color:#222;border-right-color:#222"></div>
<div class="t" style="left:248px;top:946px;color:#ddd;font-size:12px">&lt;</div>
<div class="a" style="left:261px;top:945px;width:124px;height:17px;background:#464646;border-bottom:2px solid #111;border-right:1px solid #111"></div>
<div class="t" style="left:261px;top:946px;width:124px;text-align:center;color:#e4e4e4;font-size:11.5px">0 / 100</div>
<div class="a" style="left:386px;top:945px;width:15px;height:17px;background:#474747;border:1px solid #3a3a3a;border-bottom-color:#222;border-right-color:#222"></div>
<div class="t" style="left:389px;top:946px;color:#ddd;font-size:12px">&gt;</div>
<div class="a" style="left:244px;top:963px;width:1493px;height:1px;background:#1a1a1a"></div>
<div class="a" style="left:244px;top:964px;width:1493px;height:26px;background:#444"></div>
<svg class="a" style="left:256px;top:968px" width="20" height="18"><rect x="1.5" y="1.5" width="16" height="5" fill="none" stroke="#ddd"/><path d="M3 4 q2 -2 4 0 t4 0 l5 0" stroke="#ddd" fill="none" stroke-width="0.8"/><path d="M5 14 v-5 m-2 2 l2 -2 l2 2 M13 9 v5 m-2 -2 l2 2 l2 -2" stroke="#ddd" fill="none"/><rect x="1.5" y="14.5" width="16" height="2.5" fill="none" stroke="#ddd"/></svg>
<div class="a" style="left:294px;top:965px;width:1392px;height:25px;background:#2d2d2d;border-left:1px solid #222"></div>
<div class="a" style="left:296px;top:966px;width:9px;height:23px;background:#8f7f2c;opacity:0.9"></div>
<svg class="a" style="left:0;top:964px" width="1700" height="26"><line x1="300.0" y1="0" x2="300.0" y2="26" stroke="#8a8a8a" stroke-width="1"/><line x1="313.8" y1="0" x2="313.8" y2="11" stroke="#8a8a8a" stroke-width="1"/><line x1="327.6" y1="0" x2="327.6" y2="11" stroke="#8a8a8a" stroke-width="1"/><line x1="341.4" y1="0" x2="341.4" y2="11" stroke="#8a8a8a" stroke-width="1"/><line x1="355.2" y1="0" x2="355.2" y2="11" stroke="#8a8a8a" stroke-width="1"/><line x1="369.0" y1="0" x2="369.0" y2="26" stroke="#8a8a8a" stroke-width="1"/><line x1="382.8" y1="0" x2="382.8" y2="11" stroke="#8a8a8a" stroke-width="1"/><line x1="396.6" y1="0" x2="396.6" y2="11" stroke="#8a8a8a" stroke-width="1"/><line x1="410.4" y1="0" x2="410.4" y2="11" stroke="#8a8a8a" stroke-width="1"/><line x1="424.2" y1="0" x2="424.2" y2="11" stroke="#8a8a8a" stroke-width="1"/><line x1="438.0" y1="0" x2="438.0" y2="26" stroke="#8a8a8a" stroke-width="1"/><line x1="451.8" y1="0" x2="451.8" y2="11" stroke="#8a8a8a" stroke-width="1"/><line x1="465.6" y1="0" x2="465.6" y2="11" stroke="#8a8a8a" stroke-width="1"/><line x1="479.4" y1="0" x2="479.4" y2="11" stroke="#8a8a8a" stroke-width="1"/><line x1="493.2" y1="0" x2="493.2" y2="11" stroke="#8a8a8a" stroke-width="1"/><line x1="507.0" y1="0" x2="507.0" y2="26" stroke="#8a8a8a" stroke-width="1"/><line x1="520.8" y1="0" x2="520.8" y2="11" stroke="#8a8a8a" stroke-width="1"/><line x1="534.6" y1="0" x2="534.6" y2="11" stroke="#8a8a8a" stroke-width="1"/><line x1="548.4" y1="0" x2="548.4" y2="11" stroke="#8a8a8a" stroke-width="1"/><line x1="562.2" y1="0" x2="562.2" y2="11" stroke="#8a8a8a" stroke-width="1"/><line x1="576.0" y1="0" x2="576.0" y2="26" stroke="#8a8a8a" stroke-width="1"/><line x1="589.8" y1="0" x2="589.8" y2="11" stroke="#8a8a8a" stroke-width="1"/><line x1="603.6" y1="0" x2="603.6" y2="11" stroke="#8a8a8a" stroke-width="1"/><line x1="617.4" y1="0" x2="617.4" y2="11" stroke="#8a8a8a" stroke-width="1"/><line x1="631.2" y1="0" x2="631.2" y2="11" stroke="#8a8a8a" stroke-width="1"/><line x1="645.0" y1="0" x2="645.0" y2="26" stroke="#8a8a8a" stroke-width="1"/><line x1="658.8" y1="0" x2="658.8" y2="11" stroke="#8a8a8a" stroke-width="1"/><line x1="672.6" y1="0" x2="672.6" y2="11" stroke="#8a8a8a" stroke-width="1"/><line x1="686.4" y1="0" x2="686.4" y2="11" stroke="#8a8a8a" stroke-width="1"/><line x1="700.2" y1="0" x2="700.2" y2="11" stroke="#8a8a8a" stroke-width="1"/><line x1="714.0" y1="0" x2="714.0" y2="26" stroke="#8a8a8a" stroke-width="1"/><line x1="727.8" y1="0" x2="727.8" y2="11" stroke="#8a8a8a" stroke-width="1"/><line x1="741.6" y1="0" x2="741.6" y2="11" stroke="#8a8a8a" stroke-width="1"/><line x1="755.4" y1="0" x2="755.4" y2="11" stroke="#8a8a8a" stroke-width="1"/><line x1="769.2" y1="0" x2="769.2" y2="11" stroke="#8a8a8a" stroke-width="1"/><line x1="783.0" y1="0" x2="783.0" y2="26" stroke="#8a8a8a" stroke-width="1"/><line x1="796.8" y1="0" x2="796.8" y2="11" stroke="#8a8a8a" stroke-width="1"/><line x1="810.6" y1="0" x2="810.6" y2="11" stroke="#8a8a8a" stroke-width="1"/><line x1="824.4" y1="0" x2="824.4" y2="11" stroke="#8a8a8a" stroke-width="1"/><line x1="838.2" y1="0" x2="838.2" y2="11" stroke="#8a8a8a" stroke-width="1"/><line x1="852.0" y1="0" x2="852.0" y2="26" stroke="#8a8a8a" stroke-width="1"/><line x1="865.8" y1="0" x2="865.8" y2="11" stroke="#8a8a8a" stroke-width="1"/><line x1="879.6" y1="0" x2="879.6" y2="11" stroke="#8a8a8a" stroke-width="1"/><line x1="893.4" y1="0" x2="893.4" y2="11" stroke="#8a8a8a" stroke-width="1"/><line x1="907.2" y1="0" x2="907.2" y2="11" stroke="#8a8a8a" stroke-width="1"/><line x1="921.0" y1="0" x2="921.0" y2="26" stroke="#8a8a8a" stroke-width="1"/><line x1="934.8" y1="0" x2="934.8" y2="11" stroke="#8a8a8a" stroke-width="1"/><line x1="948.6" y1="0" x2="948.6" y2="11" stroke="#8a8a8a" stroke-width="1"/><line x1="962.4" y1="0" x2="962.4" y2="11" stroke="#8a8a8a" stroke-width="1"/><line x1="976.2" y1="0" x2="976.2" y2="11" stroke="#8a8a8a" stroke-width="1"/><line x1="990.0" y1="0" x2="990.0" y2="26" stroke="#8a8a8a" stroke-width="1"/><line x1="1003.8" y1="0" x2="1003.8" y2="11" stroke="#8a8a8a" stroke-width="1"/><line x1="1017.6" y1="0" x2="1017.6" y2="11" stroke="#8a8a8a" stroke-width="1"/><line x1="1031.4" y1="0" x2="1031.4" y2="11" stroke="#8a8a8a" stroke-width="1"/><line x1="1045.2" y1="0" x2="1045.2" y2="11" stroke="#8a8a8a" stroke-width="1"/><line x1="1059.0" y1="0" x2="1059.0" y2="26" stroke="#8a8a8a" stroke-width="1"/><line x1="1072.8" y1="0" x2="1072.8" y2="11" stroke="#8a8a8a" stroke-width="1"/><line x1="1086.6" y1="0" x2="1086.6" y2="11" stroke="#8a8a8a" stroke-width="1"/><line x1="1100.4" y1="0" x2="1100.4" y2="11" stroke="#8a8a8a" stroke-width="1"/><line x1="1114.2" y1="0" x2="1114.2" y2="11" stroke="#8a8a8a" stroke-width="1"/><line x1="1128.0" y1="0" x2="1128.0" y2="26" stroke="#8a8a8a" stroke-width="1"/><line x1="1141.8" y1="0" x2="1141.8" y2="11" stroke="#8a8a8a" stroke-width="1"/><line x1="1155.6" y1="0" x2="1155.6" y2="11" stroke="#8a8a8a" stroke-width="1"/><line x1="1169.4" y1="0" x2="1169.4" y2="11" stroke="#8a8a8a" stroke-width="1"/><line x1="1183.2" y1="0" x2="1183.2" y2="11" stroke="#8a8a8a" stroke-width="1"/><line x1="1197.0" y1="0" x2="1197.0" y2="26" stroke="#8a8a8a" stroke-width="1"/><line x1="1210.8" y1="0" x2="1210.8" y2="11" stroke="#8a8a8a" stroke-width="1"/><line x1="1224.6" y1="0" x2="1224.6" y2="11" stroke="#8a8a8a" stroke-width="1"/><line x1="1238.4" y1="0" x2="1238.4" y2="11" stroke="#8a8a8a" stroke-width="1"/><line x1="1252.2" y1="0" x2="1252.2" y2="11" stroke="#8a8a8a" stroke-width="1"/><line x1="1266.0" y1="0" x2="1266.0" y2="26" stroke="#8a8a8a" stroke-width="1"/><line x1="1279.8" y1="0" x2="1279.8" y2="11" stroke="#8a8a8a" stroke-width="1"/><line x1="1293.6" y1="0" x2="1293.6" y2="11" stroke="#8a8a8a" stroke-width="1"/><line x1="1307.4" y1="0" x2="1307.4" y2="11" stroke="#8a8a8a" stroke-width="1"/><line x1="1321.2" y1="0" x2="1321.2" y2="11" stroke="#8a8a8a" stroke-width="1"/><line x1="1335.0" y1="0" x2="1335.0" y2="26" stroke="#8a8a8a" stroke-width="1"/><line x1="1348.8" y1="0" x2="1348.8" y2="11" stroke="#8a8a8a" stroke-width="1"/><line x1="1362.6" y1="0" x2="1362.6" y2="11" stroke="#8a8a8a" stroke-width="1"/><line x1="1376.4" y1="0" x2="1376.4" y2="11" stroke="#8a8a8a" stroke-width="1"/><line x1="1390.2" y1="0" x2="1390.2" y2="11" stroke="#8a8a8a" stroke-width="1"/><line x1="1404.0" y1="0" x2="1404.0" y2="26" stroke="#8a8a8a" stroke-width="1"/><line x1="1417.8" y1="0" x2="1417.8" y2="11" stroke="#8a8a8a" stroke-width="1"/><line x1="1431.6" y1="0" x2="1431.6" y2="11" stroke="#8a8a8a" stroke-width="1"/><line x1="1445.4" y1="0" x2="1445.4" y2="11" stroke="#8a8a8a" stroke-width="1"/><line x1="1459.2" y1="0" x2="1459.2" y2="11" stroke="#8a8a8a" stroke-width="1"/><line x1="1473.0" y1="0" x2="1473.0" y2="26" stroke="#8a8a8a" stroke-width="1"/><line x1="1486.8" y1="0" x2="1486.8" y2="11" stroke="#8a8a8a" stroke-width="1"/><line x1="1500.6" y1="0" x2="1500.6" y2="11" stroke="#8a8a8a" stroke-width="1"/><line x1="1514.4" y1="0" x2="1514.4" y2="11" stroke="#8a8a8a" stroke-width="1"/><line x1="1528.2" y1="0" x2="1528.2" y2="11" stroke="#8a8a8a" stroke-width="1"/><line x1="1542.0" y1="0" x2="1542.0" y2="26" stroke="#8a8a8a" stroke-width="1"/><line x1="1555.8" y1="0" x2="1555.8" y2="11" stroke="#8a8a8a" stroke-width="1"/><line x1="1569.6" y1="0" x2="1569.6" y2="11" stroke="#8a8a8a" stroke-width="1"/><line x1="1583.4" y1="0" x2="1583.4" y2="11" stroke="#8a8a8a" stroke-width="1"/><line x1="1597.2" y1="0" x2="1597.2" y2="11" stroke="#8a8a8a" stroke-width="1"/><line x1="1611.0" y1="0" x2="1611.0" y2="26" stroke="#8a8a8a" stroke-width="1"/><line x1="1624.8" y1="0" x2="1624.8" y2="11" stroke="#8a8a8a" stroke-width="1"/><line x1="1638.6" y1="0" x2="1638.6" y2="11" stroke="#8a8a8a" stroke-width="1"/><line x1="1652.4" y1="0" x2="1652.4" y2="11" stroke="#8a8a8a" stroke-width="1"/><line x1="1666.2" y1="0" x2="1666.2" y2="11" stroke="#8a8a8a" stroke-width="1"/><line x1="1680.0" y1="0" x2="1680.0" y2="26" stroke="#8a8a8a" stroke-width="1"/></svg>
<div class="t" style="left:300.0px;top:976px;width:30px;margin-left:-15px;text-align:center;color:#f0e070;font-size:11px;background:transparent">0</div>
<div class="t" style="left:369.0px;top:976px;width:30px;margin-left:-15px;text-align:center;color:#e8e8e8;font-size:11px;background:transparent">5</div>
<div class="t" style="left:438.0px;top:976px;width:30px;margin-left:-15px;text-align:center;color:#e8e8e8;font-size:11px;background:transparent">10</div>
<div class="t" style="left:507.0px;top:976px;width:30px;margin-left:-15px;text-align:center;color:#e8e8e8;font-size:11px;background:transparent">15</div>
<div class="t" style="left:576.0px;top:976px;width:30px;margin-left:-15px;text-align:center;color:#e8e8e8;font-size:11px;background:transparent">20</div>
<div class="t" style="left:645.0px;top:976px;width:30px;margin-left:-15px;text-align:center;color:#e8e8e8;font-size:11px;background:transparent">25</div>
<div class="t" style="left:714.0px;top:976px;width:30px;margin-left:-15px;text-align:center;color:#e8e8e8;font-size:11px;background:transparent">30</div>
<div class="t" style="left:783.0px;top:976px;width:30px;margin-left:-15px;text-align:center;color:#e8e8e8;font-size:11px;background:transparent">35</div>
<div class="t" style="left:852.0px;top:976px;width:30px;margin-left:-15px;text-align:center;color:#e8e8e8;font-size:11px;background:transparent">40</div>
<div class="t" style="left:921.0px;top:976px;width:30px;margin-left:-15px;text-align:center;color:#e8e8e8;font-size:11px;background:transparent">45</div>
<div class="t" style="left:990.0px;top:976px;width:30px;margin-left:-15px;text-align:center;color:#e8e8e8;font-size:11px;background:transparent">50</div>
<div class="t" style="left:1059.0px;top:976px;width:30px;margin-left:-15px;text-align:center;color:#e8e8e8;font-size:11px;background:transparent">55</div>
<div class="t" style="left:1128.0px;top:976px;width:30px;margin-left:-15px;text-align:center;color:#e8e8e8;font-size:11px;background:transparent">60</div>
<div class="t" style="left:1197.0px;top:976px;width:30px;margin-left:-15px;text-align:center;color:#e8e8e8;font-size:11px;background:transparent">65</div>
<div class="t" style="left:1266.0px;top:976px;width:30px;margin-left:-15px;text-align:center;color:#e8e8e8;font-size:11px;background:transparent">70</div>
<div class="t" style="left:1335.0px;top:976px;width:30px;margin-left:-15px;text-align:center;color:#e8e8e8;font-size:11px;background:transparent">75</div>
<div class="t" style="left:1404.0px;top:976px;width:30px;margin-left:-15px;text-align:center;color:#e8e8e8;font-size:11px;background:transparent">80</div>
<div class="t" style="left:1473.0px;top:976px;width:30px;margin-left:-15px;text-align:center;color:#e8e8e8;font-size:11px;background:transparent">85</div>
<div class="t" style="left:1542.0px;top:976px;width:30px;margin-left:-15px;text-align:center;color:#e8e8e8;font-size:11px;background:transparent">90</div>
<div class="t" style="left:1611.0px;top:976px;width:30px;margin-left:-15px;text-align:center;color:#e8e8e8;font-size:11px;background:transparent">95</div>
<div class="t" style="left:1680.0px;top:976px;width:30px;margin-left:-15px;text-align:center;color:#e8e8e8;font-size:11px;background:transparent">100</div>
<div class="a" style="left:1686px;top:964px;width:51px;height:1px;background:#1a1a1a"></div>
<div class="a" style="left:0;top:990px;width:1920px;height:50px;background:#444"></div>
<div class="a" style="left:0;top:988px;width:244px;height:2px;background:#1a1a1a"></div>
<div class="a" style="left:2px;top:993px;width:96px;height:21px;background:#dcc8c8;border:1px solid #888;box-shadow:inset 1px 1px 0 #fff"></div>
<div class="a" style="left:2px;top:1016px;width:96px;height:22px;background:#fff;border:1px solid #999"></div>
<div class="t" style="left:6px;top:1019.5px;color:#777;font-family:'Liberation Mono',monospace;font-size:11.5px;width:88px;overflow:hidden">MAXScript Mini</div>
<div class="a" style="left:102px;top:992px;width:2px;height:48px;background:#333"></div>
<div class="a" style="left:105px;top:994px;width:943px;height:20px;background:#464646;border-top:1px solid #111;border-left:1px solid #333;border-bottom:1px solid #3a3a3a;border-right:1px solid #555"></div>
<div class="t" style="left:112px;top:998px;color:#e8e8e8;font-size:11px">None Selected</div>
<div class="a" style="left:105px;top:1019px;width:1245px;height:21px;background:#464646;border-top:1px solid #111;border-left:1px solid #333"></div>
<div class="t" style="left:112px;top:1023px;color:#e8e8e8;font-size:11px">Click or click-and-drag to select objects</div>
<svg class="a" style="left:1052px;top:996px" width="80" height="18"><path d="M8 2 a4.5 4.5 0 0 1 4.5 4.5 q0 3 -2.5 5 v4 h-4 v-4 q-2.5 -2 -2.5 -5 a4.5 4.5 0 0 1 4.5 -4.5z" fill="#9a9a9a" stroke="#555" stroke-width="0.6"/><rect x="30" y="7" width="10" height="8" fill="#aaa"/><path d="M32 7 v-2 a3 3 0 0 1 6 0 v2" fill="none" stroke="#aaa" stroke-width="1.5"/><rect x="54" y="2" width="14" height="14" fill="#fff"/><circle cx="61" cy="9" r="4" fill="#fff" stroke="#444" stroke-width="1.2"/><path d="M54 9 h3 M65 9 h3 M61 2 v3 M61 13 v3" stroke="#444"/></svg>
<div class="t" style="left:1130px;top:998px;color:#ddd;font-size:11.5px">X:</div>
<div class="a" style="left:1141px;top:994px;width:57px;height:20px;background:#555;border-top:2px solid #151515;border-left:2px solid #151515"></div>
<div class="t" style="left:1144px;top:998px;color:#14142e;font-size:11.5px">0,41cm</div>
<div class="t" style="left:1212px;top:998px;color:#ddd;font-size:11.5px">Y:</div>
<div class="a" style="left:1223px;top:994px;width:57px;height:20px;background:#555;border-top:2px solid #151515;border-left:2px solid #151515"></div>
<div class="t" style="left:1226px;top:998px;color:#14142e;font-size:11.5px">-8,028cm</div>
<div class="t" style="left:1294px;top:998px;color:#ddd;font-size:11.5px">Z:</div>
<div class="a" style="left:1305px;top:994px;width:57px;height:20px;background:#555;border-top:2px solid #151515;border-left:2px solid #151515"></div>
<div class="t" style="left:1308px;top:998px;color:#14142e;font-size:11.5px">0,0cm</div>
<div class="a" style="left:1377px;top:994px;width:100px;height:21px;background:#464646;border:1px solid #333"></div>
<div class="t" style="left:1382px;top:998px;color:#e8e8e8;font-size:11.5px">Grid = 25,4cm</div>
<div class="a" style="left:1353px;top:1020px;width:20px;height:19px;background:#3b79d6;border:1px solid #111"></div>
<svg class="a" style="left:1356px;top:1023px" width="14" height="14"><rect x="1.5" y="3.5" width="9" height="9" fill="none" stroke="#fff" stroke-width="1.3"/><path d="M3.5 1.5 h9 v9" fill="none" stroke="#fff" stroke-width="1.3"/></svg>
<div class="a" style="left:1377px;top:1019px;width:100px;height:21px;background:#464646;border:1px solid #333"></div>
<div class="t" style="left:1382px;top:1023px;color:#e8e8e8;font-size:11.5px">Add Time Tag</div>
<div class="a" style="left:1480px;top:993px;width:44px;height:44px;background:#444;border:1px solid #2a2a2a;border-right-color:#555;border-bottom-color:#555"></div>
<svg class="a" style="left:1488px;top:1007px" width="28" height="16"><circle cx="6" cy="7" r="4.5" fill="none" stroke="#111" stroke-width="2.5"/><path d="M10 7 h14 M18 7 v4 M22 7 v3" stroke="#111" stroke-width="2.5"/></svg>
<div class="a" style="left:1527px;top:994px;width:48px;height:20px;background:#434343;border:1px solid #222;box-shadow:inset 1px 1px 0 #555"></div>
<div class="t" style="left:1527px;top:997.0px;width:48px;text-align:center;color:#ddd;font-size:11px">Auto Key</div>
<div class="a" style="left:1527px;top:1016px;width:48px;height:20px;background:#434343;border:1px solid #222;box-shadow:inset 1px 1px 0 #555"></div>
<div class="t" style="left:1527px;top:1019.0px;width:48px;text-align:center;color:#ddd;font-size:11px">Set Key</div>
<div class="a" style="left:1604px;top:1016px;width:89px;height:20px;background:#434343;border:1px solid #222;box-shadow:inset 1px 1px 0 #555"></div>
<div class="t" style="left:1604px;top:1019.0px;width:89px;text-align:center;color:#ddd;font-size:11px">Key Filters...</div>
<div class="a" style="left:1578px;top:994px;width:115px;height:20px;background:#e8e8e8;border:1px solid #111"></div>
<div class="t" style="left:1581px;top:997px;color:#111;font-size:12px">Selected</div>
<svg class="a" style="left:1676px;top:999px" width="12" height="10"><path d="M2 3 l4 4 l4 -4" stroke="#333" fill="none" stroke-width="1.2"/></svg>
<svg class="a" style="left:1580px;top:1017px" width="22" height="20"><path d="M2 15 q4 -2 6 -10 q2 8 5 6 q3 -2 5 -9" fill="none" stroke="#d33" stroke-width="1.5"/><circle cx="4" cy="15" r="1" fill="#33c"/><circle cx="16" cy="4" r="1" fill="#33c"/></svg>
<svg class="a" style="left:1698px;top:994px" width="222" height="46" fill="#ccc" stroke="none">
<g><rect x="4" y="4" width="1.5" height="11"/><path d="M6 9.5 l6 -5 v10z M12 9.5 l6 -5 v10z" fill="none" stroke="#ccc"/><rect x="18" y="4" width="1.5" height="11"/></g>
<rect x="34" y="3" width="1" height="14" fill="#222"/>
<path d="M30 9.5 l6 -5 v10z" transform="translate(0,0)" fill="none" stroke="#ccc"/><rect x="38" y="5" width="2" height="10"/><rect x="42" y="5" width="2" height="10"/><rect x="46" y="5" width="2" height="10"/>
<path d="M57 4 l9 5.5 l-9 5.5z" fill="none" stroke="#ccc" stroke-width="1.3"/>
<rect x="76" y="5" width="2" height="10"/><rect x="80" y="5" width="2" height="10"/><rect x="84" y="5" width="2" height="10"/><path d="M87 4.5 l6 5 l-6 5z" fill="none" stroke="#ccc"/>
<rect x="96" y="3" width="1" height="14" fill="#222"/>
<rect x="101" y="4" width="1.5" height="11"/><path d="M103 4.5 l6 5 l-6 5z M109 4.5 l6 5 l-6 5z" fill="none" stroke="#ccc"/><rect x="116" y="4" width="1.5" height="11"/>
<circle cx="131.5" cy="7.5" r="4.5" fill="#e8eef4" stroke="#999" stroke-width="0.6"/><path d="M134.5 10.5 l4 4" stroke="#aaa" stroke-width="2.2"/><path d="M137 4 h5 M139.5 1.5 v5 M137 8 h5" stroke="#ddd" stroke-width="0.9"/><rect x="152" y="2" width="6" height="6" fill="#ddd"/><rect x="159" y="2" width="6" height="6" fill="#ddd"/><rect x="152" y="9" width="6" height="6" fill="#ddd"/><circle cx="165" cy="13" r="3.2" fill="#cde" stroke="#888" stroke-width="0.6"/><path d="M167.5 15.5 l2.5 2.5" stroke="#aaa" stroke-width="1.5"/><path d="M175.5 5 v-3 h3 M191.5 5 v-3 h-3 M175.5 15 v3 h3 M191.5 15 v3 h-3" stroke="#ddd" fill="none"/><path d="M180 7 l2 -2 h6 v7 l-2 2 h-6z" fill="#5cb85c"/><path d="M180 7 h6 v7 h-6z" fill="#6fd06f"/><rect x="204" y="1" width="6" height="6" fill="#ddd"/><rect x="211" y="1" width="6" height="6" fill="#ddd"/><rect x="211" y="8" width="6" height="6" fill="#ddd"/><path d="M199 9 l2 -2 h6 v7 l-2 2 h-6z" fill="#5cb85c"/><path d="M199 9 h6 v7 h-6z" fill="#6fd06f"/>
<g transform="translate(0,23)">
<rect x="4" y="4" width="1.5" height="11"/><path d="M6 9.5 l5 -4 v8z M12 5.5 l5 4 l-5 4z" fill="none" stroke="#ccc"/><rect x="18" y="4" width="1.5" height="11"/>
<rect x="26" y="0" width="2" height="21" fill="#222"/>
<path d="M97 1 v6 l-3 -3 z M97 19 v-6 l-3 3z" />
<rect x="107" y="1" width="12" height="13" fill="#e8e8e8"/><rect x="108.5" y="2.5" width="5" height="5" fill="#3567b8"/><circle cx="117" cy="13.5" r="4.2" fill="#eee" stroke="#555" stroke-width="0.8"/><path d="M117 11 v2.5 h2" stroke="#222" fill="none" stroke-width="0.8"/><path d="M130 2 l15 8 l-15 8" fill="none" stroke="#bbb" stroke-width="1.2"/><path d="M157 17 q-4 -2 -5 -7 l2 -1 l2 3 v-9 l2 0 v7 v-8 h2 v8 v-7 h2 v7 v-5 h2 v9 q0 5 -5 6z" fill="#f4f4f4" stroke="#666" stroke-width="0.6"/><circle cx="184" cy="10" r="6" fill="#eee" stroke="#999" stroke-width="0.6"/><path d="M184 10 l5 -4 a6 6 0 0 1 1 6z" fill="#5cb85c"/><path d="M184 1 v3 M178 14 l-3 3" stroke="#ddd"/><rect x="197" y="1" width="12" height="12" fill="#ececec"/><path d="M200 4 l6 6 M200 4 h4 M200 4 v4" stroke="#222" stroke-width="1.5"/><path d="M203 16 h10 v-10" fill="none" stroke="#555"/>
</g>
</svg>
<div class="a" style="left:1726px;top:1016px;width:62px;height:20px;background:#555;border-top:2px solid #151515;border-left:2px solid #151515"></div>
<div class="t" style="left:1730px;top:1020px;color:#b8c8e8;font-size:11.5px">0</div>
<div class="a" style="left:1789px;top:1017px;width:11px;height:18px;background:#454545;border:1px solid #333"></div>
<svg class="a" style="left:1790px;top:1018px" width="10" height="16"><path d="M2 6 l3 -3 l3 3z M2 10 l3 3 l3 -3z" fill="#ccc"/></svg>
<div class="a" style="left:1802px;top:1016px;width:2px;height:22px;background:#222"></div>
</body></html>
